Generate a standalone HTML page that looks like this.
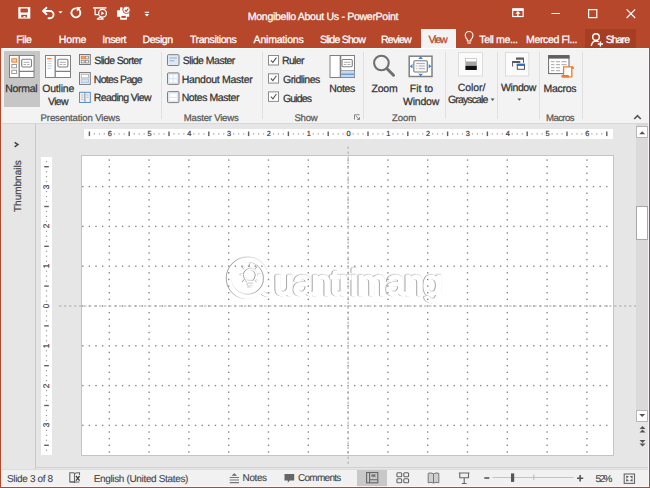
<!DOCTYPE html>
<html><head><meta charset="utf-8">
<style>
*{margin:0;padding:0;box-sizing:border-box}
html,body{width:650px;height:488px;overflow:hidden;background:#e6e6e6}
body{position:relative;font-family:"Liberation Sans",sans-serif;color:#444}
.a{position:absolute;white-space:nowrap}
div.t{text-rendering:geometricPrecision;-webkit-text-stroke:0.25px currentColor}
i.a{display:block}
.rn{font-size:7.4px;line-height:8px;color:#3a3a3a;text-rendering:geometricPrecision;-webkit-text-stroke:0.2px currentColor}
</style></head><body>
<div class="a" style="left:0;top:0;width:650px;height:48px;background:#b7472a"></div>
<div class="a" style="left:420.7px;top:29px;width:35.5px;height:20px;background:#f3f3f3"></div>
<div class="a" style="left:585.2px;top:29.3px;width:51px;height:19.5px;background:#a63e23"></div>
<div class="a" style="left:0;top:48px;width:650px;height:75px;background:#f3f3f3;border-top:1px solid #fff"></div>
<div class="a" style="left:0;top:122.5px;width:650px;height:1.5px;background:#d8d8d8"></div>
<div class="a" style="left:4px;top:51px;width:36.3px;height:55.8px;background:#c6c6c6"></div>

<div class="a" style="left:1px;top:124px;width:648px;height:345px;background:#e6e6e6"></div>
<div class="a" style="left:35px;top:124px;width:1px;height:345px;background:#c8c8c8"></div>
<div class="a" style="left:35px;top:466.5px;width:614px;height:1px;background:#d0d0d0"></div>
<div class="a" style="left:84px;top:128.5px;width:528.5px;height:10px;background:#fff"></div>
<div class="a" style="left:41px;top:157.3px;width:11px;height:297.5px;background:#fff"></div>
<div class="a" style="left:81.3px;top:155.2px;width:532.5px;height:300.5px;background:#fff;border:1px solid #c4c4c4"></div>
<div class="a" style="left:636px;top:124px;width:12.5px;height:298px;background:#dadada"></div>
<div class="a" style="left:636px;top:126px;width:11.7px;height:12px;background:#fff;border:1px solid #b8b8b8"></div>
<div class="a" style="left:636px;top:205.5px;width:11.7px;height:34.5px;background:#fff;border:1px solid #a8a8a8"></div>
<div class="a" style="left:636px;top:409.5px;width:11.7px;height:12px;background:#fff;border:1px solid #b8b8b8"></div>

<div class="a" style="left:1px;top:469px;width:648px;height:18px;background:#f1f1f1;border-top:1px solid #dcdcdc"></div>
<div class="a" style="left:357.4px;top:470px;width:29.6px;height:17px;background:#c8c8c8"></div>

<svg class="a" style="left:0;top:0;filter:drop-shadow(-0.8px 0.9px 0.7px rgba(0,0,0,0.32)) drop-shadow(0.4px -0.4px 0.5px rgba(0,0,0,0.12))" width="650" height="488">
<g fill="none" stroke="#fff">
<circle cx="247.6" cy="278.2" r="18.6" stroke-width="4.6"/>
<path d="M261,291 Q264,295.5 268.5,295" stroke-width="3.2" stroke-linecap="round"/>
<path d="M247.5,281.5 C245.5,279 244.6,277.3 244.6,275.2 A5.9,5.9 0 0 1 256.4,275.2 C256.4,277.3 255.5,279 253.5,281.5 Z" stroke-width="1.4"/>
<path d="M247.6,284.5 H253.4 M248.5,286.8 H252.5" stroke-width="1.3"/>
<path d="M250.5,264.2 V266.4 M243.2,267.2 L244.6,268.6 M257.8,267.2 L256.4,268.6 M241,274.6 H243 M258,274.6 H260 M243.6,281.6 L244.8,280.4 M257.4,281.6 L256.2,280.4" stroke-width="1.3" stroke-linecap="round"/>
</g>
<g font-family="Liberation Sans" font-size="35" letter-spacing="-0.75">
<text x="274.2" y="295.4" fill="#fff" stroke="#fff" stroke-width="2.3" stroke-linejoin="round">uantrimang</text>
</g>
</svg>
<svg class="a" style="left:0;top:0" width="650" height="488"><g fill="#888"><rect x="108.60" y="159.37" width="1.4" height="1.4"/><rect x="108.60" y="166.00" width="1.4" height="1.4"/><rect x="108.60" y="172.63" width="1.4" height="1.4"/><rect x="108.60" y="179.27" width="1.4" height="1.4"/><rect x="108.60" y="185.90" width="1.4" height="1.4"/><rect x="108.60" y="192.53" width="1.4" height="1.4"/><rect x="108.60" y="199.17" width="1.4" height="1.4"/><rect x="108.60" y="205.80" width="1.4" height="1.4"/><rect x="108.60" y="212.43" width="1.4" height="1.4"/><rect x="108.60" y="219.07" width="1.4" height="1.4"/><rect x="108.60" y="225.70" width="1.4" height="1.4"/><rect x="108.60" y="232.33" width="1.4" height="1.4"/><rect x="108.60" y="238.97" width="1.4" height="1.4"/><rect x="108.60" y="245.60" width="1.4" height="1.4"/><rect x="108.60" y="252.23" width="1.4" height="1.4"/><rect x="108.60" y="258.87" width="1.4" height="1.4"/><rect x="108.60" y="265.50" width="1.4" height="1.4"/><rect x="108.60" y="272.13" width="1.4" height="1.4"/><rect x="108.60" y="278.77" width="1.4" height="1.4"/><rect x="108.60" y="285.40" width="1.4" height="1.4"/><rect x="108.60" y="292.03" width="1.4" height="1.4"/><rect x="108.60" y="298.67" width="1.4" height="1.4"/><rect x="108.60" y="305.30" width="1.4" height="1.4"/><rect x="108.60" y="311.93" width="1.4" height="1.4"/><rect x="108.60" y="318.57" width="1.4" height="1.4"/><rect x="108.60" y="325.20" width="1.4" height="1.4"/><rect x="108.60" y="331.83" width="1.4" height="1.4"/><rect x="108.60" y="338.47" width="1.4" height="1.4"/><rect x="108.60" y="345.10" width="1.4" height="1.4"/><rect x="108.60" y="351.73" width="1.4" height="1.4"/><rect x="108.60" y="358.37" width="1.4" height="1.4"/><rect x="108.60" y="365.00" width="1.4" height="1.4"/><rect x="108.60" y="371.63" width="1.4" height="1.4"/><rect x="108.60" y="378.27" width="1.4" height="1.4"/><rect x="108.60" y="384.90" width="1.4" height="1.4"/><rect x="108.60" y="391.53" width="1.4" height="1.4"/><rect x="108.60" y="398.17" width="1.4" height="1.4"/><rect x="108.60" y="404.80" width="1.4" height="1.4"/><rect x="108.60" y="411.43" width="1.4" height="1.4"/><rect x="108.60" y="418.07" width="1.4" height="1.4"/><rect x="108.60" y="424.70" width="1.4" height="1.4"/><rect x="108.60" y="431.33" width="1.4" height="1.4"/><rect x="108.60" y="437.97" width="1.4" height="1.4"/><rect x="108.60" y="444.60" width="1.4" height="1.4"/><rect x="108.60" y="451.23" width="1.4" height="1.4"/><rect x="148.40" y="159.37" width="1.4" height="1.4"/><rect x="148.40" y="166.00" width="1.4" height="1.4"/><rect x="148.40" y="172.63" width="1.4" height="1.4"/><rect x="148.40" y="179.27" width="1.4" height="1.4"/><rect x="148.40" y="185.90" width="1.4" height="1.4"/><rect x="148.40" y="192.53" width="1.4" height="1.4"/><rect x="148.40" y="199.17" width="1.4" height="1.4"/><rect x="148.40" y="205.80" width="1.4" height="1.4"/><rect x="148.40" y="212.43" width="1.4" height="1.4"/><rect x="148.40" y="219.07" width="1.4" height="1.4"/><rect x="148.40" y="225.70" width="1.4" height="1.4"/><rect x="148.40" y="232.33" width="1.4" height="1.4"/><rect x="148.40" y="238.97" width="1.4" height="1.4"/><rect x="148.40" y="245.60" width="1.4" height="1.4"/><rect x="148.40" y="252.23" width="1.4" height="1.4"/><rect x="148.40" y="258.87" width="1.4" height="1.4"/><rect x="148.40" y="265.50" width="1.4" height="1.4"/><rect x="148.40" y="272.13" width="1.4" height="1.4"/><rect x="148.40" y="278.77" width="1.4" height="1.4"/><rect x="148.40" y="285.40" width="1.4" height="1.4"/><rect x="148.40" y="292.03" width="1.4" height="1.4"/><rect x="148.40" y="298.67" width="1.4" height="1.4"/><rect x="148.40" y="305.30" width="1.4" height="1.4"/><rect x="148.40" y="311.93" width="1.4" height="1.4"/><rect x="148.40" y="318.57" width="1.4" height="1.4"/><rect x="148.40" y="325.20" width="1.4" height="1.4"/><rect x="148.40" y="331.83" width="1.4" height="1.4"/><rect x="148.40" y="338.47" width="1.4" height="1.4"/><rect x="148.40" y="345.10" width="1.4" height="1.4"/><rect x="148.40" y="351.73" width="1.4" height="1.4"/><rect x="148.40" y="358.37" width="1.4" height="1.4"/><rect x="148.40" y="365.00" width="1.4" height="1.4"/><rect x="148.40" y="371.63" width="1.4" height="1.4"/><rect x="148.40" y="378.27" width="1.4" height="1.4"/><rect x="148.40" y="384.90" width="1.4" height="1.4"/><rect x="148.40" y="391.53" width="1.4" height="1.4"/><rect x="148.40" y="398.17" width="1.4" height="1.4"/><rect x="148.40" y="404.80" width="1.4" height="1.4"/><rect x="148.40" y="411.43" width="1.4" height="1.4"/><rect x="148.40" y="418.07" width="1.4" height="1.4"/><rect x="148.40" y="424.70" width="1.4" height="1.4"/><rect x="148.40" y="431.33" width="1.4" height="1.4"/><rect x="148.40" y="437.97" width="1.4" height="1.4"/><rect x="148.40" y="444.60" width="1.4" height="1.4"/><rect x="148.40" y="451.23" width="1.4" height="1.4"/><rect x="188.20" y="159.37" width="1.4" height="1.4"/><rect x="188.20" y="166.00" width="1.4" height="1.4"/><rect x="188.20" y="172.63" width="1.4" height="1.4"/><rect x="188.20" y="179.27" width="1.4" height="1.4"/><rect x="188.20" y="185.90" width="1.4" height="1.4"/><rect x="188.20" y="192.53" width="1.4" height="1.4"/><rect x="188.20" y="199.17" width="1.4" height="1.4"/><rect x="188.20" y="205.80" width="1.4" height="1.4"/><rect x="188.20" y="212.43" width="1.4" height="1.4"/><rect x="188.20" y="219.07" width="1.4" height="1.4"/><rect x="188.20" y="225.70" width="1.4" height="1.4"/><rect x="188.20" y="232.33" width="1.4" height="1.4"/><rect x="188.20" y="238.97" width="1.4" height="1.4"/><rect x="188.20" y="245.60" width="1.4" height="1.4"/><rect x="188.20" y="252.23" width="1.4" height="1.4"/><rect x="188.20" y="258.87" width="1.4" height="1.4"/><rect x="188.20" y="265.50" width="1.4" height="1.4"/><rect x="188.20" y="272.13" width="1.4" height="1.4"/><rect x="188.20" y="278.77" width="1.4" height="1.4"/><rect x="188.20" y="285.40" width="1.4" height="1.4"/><rect x="188.20" y="292.03" width="1.4" height="1.4"/><rect x="188.20" y="298.67" width="1.4" height="1.4"/><rect x="188.20" y="305.30" width="1.4" height="1.4"/><rect x="188.20" y="311.93" width="1.4" height="1.4"/><rect x="188.20" y="318.57" width="1.4" height="1.4"/><rect x="188.20" y="325.20" width="1.4" height="1.4"/><rect x="188.20" y="331.83" width="1.4" height="1.4"/><rect x="188.20" y="338.47" width="1.4" height="1.4"/><rect x="188.20" y="345.10" width="1.4" height="1.4"/><rect x="188.20" y="351.73" width="1.4" height="1.4"/><rect x="188.20" y="358.37" width="1.4" height="1.4"/><rect x="188.20" y="365.00" width="1.4" height="1.4"/><rect x="188.20" y="371.63" width="1.4" height="1.4"/><rect x="188.20" y="378.27" width="1.4" height="1.4"/><rect x="188.20" y="384.90" width="1.4" height="1.4"/><rect x="188.20" y="391.53" width="1.4" height="1.4"/><rect x="188.20" y="398.17" width="1.4" height="1.4"/><rect x="188.20" y="404.80" width="1.4" height="1.4"/><rect x="188.20" y="411.43" width="1.4" height="1.4"/><rect x="188.20" y="418.07" width="1.4" height="1.4"/><rect x="188.20" y="424.70" width="1.4" height="1.4"/><rect x="188.20" y="431.33" width="1.4" height="1.4"/><rect x="188.20" y="437.97" width="1.4" height="1.4"/><rect x="188.20" y="444.60" width="1.4" height="1.4"/><rect x="188.20" y="451.23" width="1.4" height="1.4"/><rect x="228.00" y="159.37" width="1.4" height="1.4"/><rect x="228.00" y="166.00" width="1.4" height="1.4"/><rect x="228.00" y="172.63" width="1.4" height="1.4"/><rect x="228.00" y="179.27" width="1.4" height="1.4"/><rect x="228.00" y="185.90" width="1.4" height="1.4"/><rect x="228.00" y="192.53" width="1.4" height="1.4"/><rect x="228.00" y="199.17" width="1.4" height="1.4"/><rect x="228.00" y="205.80" width="1.4" height="1.4"/><rect x="228.00" y="212.43" width="1.4" height="1.4"/><rect x="228.00" y="219.07" width="1.4" height="1.4"/><rect x="228.00" y="225.70" width="1.4" height="1.4"/><rect x="228.00" y="232.33" width="1.4" height="1.4"/><rect x="228.00" y="238.97" width="1.4" height="1.4"/><rect x="228.00" y="245.60" width="1.4" height="1.4"/><rect x="228.00" y="252.23" width="1.4" height="1.4"/><rect x="228.00" y="258.87" width="1.4" height="1.4"/><rect x="228.00" y="265.50" width="1.4" height="1.4"/><rect x="228.00" y="272.13" width="1.4" height="1.4"/><rect x="228.00" y="278.77" width="1.4" height="1.4"/><rect x="228.00" y="285.40" width="1.4" height="1.4"/><rect x="228.00" y="292.03" width="1.4" height="1.4"/><rect x="228.00" y="298.67" width="1.4" height="1.4"/><rect x="228.00" y="305.30" width="1.4" height="1.4"/><rect x="228.00" y="311.93" width="1.4" height="1.4"/><rect x="228.00" y="318.57" width="1.4" height="1.4"/><rect x="228.00" y="325.20" width="1.4" height="1.4"/><rect x="228.00" y="331.83" width="1.4" height="1.4"/><rect x="228.00" y="338.47" width="1.4" height="1.4"/><rect x="228.00" y="345.10" width="1.4" height="1.4"/><rect x="228.00" y="351.73" width="1.4" height="1.4"/><rect x="228.00" y="358.37" width="1.4" height="1.4"/><rect x="228.00" y="365.00" width="1.4" height="1.4"/><rect x="228.00" y="371.63" width="1.4" height="1.4"/><rect x="228.00" y="378.27" width="1.4" height="1.4"/><rect x="228.00" y="384.90" width="1.4" height="1.4"/><rect x="228.00" y="391.53" width="1.4" height="1.4"/><rect x="228.00" y="398.17" width="1.4" height="1.4"/><rect x="228.00" y="404.80" width="1.4" height="1.4"/><rect x="228.00" y="411.43" width="1.4" height="1.4"/><rect x="228.00" y="418.07" width="1.4" height="1.4"/><rect x="228.00" y="424.70" width="1.4" height="1.4"/><rect x="228.00" y="431.33" width="1.4" height="1.4"/><rect x="228.00" y="437.97" width="1.4" height="1.4"/><rect x="228.00" y="444.60" width="1.4" height="1.4"/><rect x="228.00" y="451.23" width="1.4" height="1.4"/><rect x="267.80" y="159.37" width="1.4" height="1.4"/><rect x="267.80" y="166.00" width="1.4" height="1.4"/><rect x="267.80" y="172.63" width="1.4" height="1.4"/><rect x="267.80" y="179.27" width="1.4" height="1.4"/><rect x="267.80" y="185.90" width="1.4" height="1.4"/><rect x="267.80" y="192.53" width="1.4" height="1.4"/><rect x="267.80" y="199.17" width="1.4" height="1.4"/><rect x="267.80" y="205.80" width="1.4" height="1.4"/><rect x="267.80" y="212.43" width="1.4" height="1.4"/><rect x="267.80" y="219.07" width="1.4" height="1.4"/><rect x="267.80" y="225.70" width="1.4" height="1.4"/><rect x="267.80" y="232.33" width="1.4" height="1.4"/><rect x="267.80" y="238.97" width="1.4" height="1.4"/><rect x="267.80" y="245.60" width="1.4" height="1.4"/><rect x="267.80" y="252.23" width="1.4" height="1.4"/><rect x="267.80" y="258.87" width="1.4" height="1.4"/><rect x="267.80" y="265.50" width="1.4" height="1.4"/><rect x="267.80" y="272.13" width="1.4" height="1.4"/><rect x="267.80" y="278.77" width="1.4" height="1.4"/><rect x="267.80" y="285.40" width="1.4" height="1.4"/><rect x="267.80" y="292.03" width="1.4" height="1.4"/><rect x="267.80" y="298.67" width="1.4" height="1.4"/><rect x="267.80" y="305.30" width="1.4" height="1.4"/><rect x="267.80" y="311.93" width="1.4" height="1.4"/><rect x="267.80" y="318.57" width="1.4" height="1.4"/><rect x="267.80" y="325.20" width="1.4" height="1.4"/><rect x="267.80" y="331.83" width="1.4" height="1.4"/><rect x="267.80" y="338.47" width="1.4" height="1.4"/><rect x="267.80" y="345.10" width="1.4" height="1.4"/><rect x="267.80" y="351.73" width="1.4" height="1.4"/><rect x="267.80" y="358.37" width="1.4" height="1.4"/><rect x="267.80" y="365.00" width="1.4" height="1.4"/><rect x="267.80" y="371.63" width="1.4" height="1.4"/><rect x="267.80" y="378.27" width="1.4" height="1.4"/><rect x="267.80" y="384.90" width="1.4" height="1.4"/><rect x="267.80" y="391.53" width="1.4" height="1.4"/><rect x="267.80" y="398.17" width="1.4" height="1.4"/><rect x="267.80" y="404.80" width="1.4" height="1.4"/><rect x="267.80" y="411.43" width="1.4" height="1.4"/><rect x="267.80" y="418.07" width="1.4" height="1.4"/><rect x="267.80" y="424.70" width="1.4" height="1.4"/><rect x="267.80" y="431.33" width="1.4" height="1.4"/><rect x="267.80" y="437.97" width="1.4" height="1.4"/><rect x="267.80" y="444.60" width="1.4" height="1.4"/><rect x="267.80" y="451.23" width="1.4" height="1.4"/><rect x="307.60" y="159.37" width="1.4" height="1.4"/><rect x="307.60" y="166.00" width="1.4" height="1.4"/><rect x="307.60" y="172.63" width="1.4" height="1.4"/><rect x="307.60" y="179.27" width="1.4" height="1.4"/><rect x="307.60" y="185.90" width="1.4" height="1.4"/><rect x="307.60" y="192.53" width="1.4" height="1.4"/><rect x="307.60" y="199.17" width="1.4" height="1.4"/><rect x="307.60" y="205.80" width="1.4" height="1.4"/><rect x="307.60" y="212.43" width="1.4" height="1.4"/><rect x="307.60" y="219.07" width="1.4" height="1.4"/><rect x="307.60" y="225.70" width="1.4" height="1.4"/><rect x="307.60" y="232.33" width="1.4" height="1.4"/><rect x="307.60" y="238.97" width="1.4" height="1.4"/><rect x="307.60" y="245.60" width="1.4" height="1.4"/><rect x="307.60" y="252.23" width="1.4" height="1.4"/><rect x="307.60" y="258.87" width="1.4" height="1.4"/><rect x="307.60" y="265.50" width="1.4" height="1.4"/><rect x="307.60" y="272.13" width="1.4" height="1.4"/><rect x="307.60" y="278.77" width="1.4" height="1.4"/><rect x="307.60" y="285.40" width="1.4" height="1.4"/><rect x="307.60" y="292.03" width="1.4" height="1.4"/><rect x="307.60" y="298.67" width="1.4" height="1.4"/><rect x="307.60" y="305.30" width="1.4" height="1.4"/><rect x="307.60" y="311.93" width="1.4" height="1.4"/><rect x="307.60" y="318.57" width="1.4" height="1.4"/><rect x="307.60" y="325.20" width="1.4" height="1.4"/><rect x="307.60" y="331.83" width="1.4" height="1.4"/><rect x="307.60" y="338.47" width="1.4" height="1.4"/><rect x="307.60" y="345.10" width="1.4" height="1.4"/><rect x="307.60" y="351.73" width="1.4" height="1.4"/><rect x="307.60" y="358.37" width="1.4" height="1.4"/><rect x="307.60" y="365.00" width="1.4" height="1.4"/><rect x="307.60" y="371.63" width="1.4" height="1.4"/><rect x="307.60" y="378.27" width="1.4" height="1.4"/><rect x="307.60" y="384.90" width="1.4" height="1.4"/><rect x="307.60" y="391.53" width="1.4" height="1.4"/><rect x="307.60" y="398.17" width="1.4" height="1.4"/><rect x="307.60" y="404.80" width="1.4" height="1.4"/><rect x="307.60" y="411.43" width="1.4" height="1.4"/><rect x="307.60" y="418.07" width="1.4" height="1.4"/><rect x="307.60" y="424.70" width="1.4" height="1.4"/><rect x="307.60" y="431.33" width="1.4" height="1.4"/><rect x="307.60" y="437.97" width="1.4" height="1.4"/><rect x="307.60" y="444.60" width="1.4" height="1.4"/><rect x="307.60" y="451.23" width="1.4" height="1.4"/><rect x="347.40" y="159.37" width="1.4" height="1.4"/><rect x="347.40" y="166.00" width="1.4" height="1.4"/><rect x="347.40" y="172.63" width="1.4" height="1.4"/><rect x="347.40" y="179.27" width="1.4" height="1.4"/><rect x="347.40" y="185.90" width="1.4" height="1.4"/><rect x="347.40" y="192.53" width="1.4" height="1.4"/><rect x="347.40" y="199.17" width="1.4" height="1.4"/><rect x="347.40" y="205.80" width="1.4" height="1.4"/><rect x="347.40" y="212.43" width="1.4" height="1.4"/><rect x="347.40" y="219.07" width="1.4" height="1.4"/><rect x="347.40" y="225.70" width="1.4" height="1.4"/><rect x="347.40" y="232.33" width="1.4" height="1.4"/><rect x="347.40" y="238.97" width="1.4" height="1.4"/><rect x="347.40" y="245.60" width="1.4" height="1.4"/><rect x="347.40" y="252.23" width="1.4" height="1.4"/><rect x="347.40" y="258.87" width="1.4" height="1.4"/><rect x="347.40" y="265.50" width="1.4" height="1.4"/><rect x="347.40" y="272.13" width="1.4" height="1.4"/><rect x="347.40" y="278.77" width="1.4" height="1.4"/><rect x="347.40" y="285.40" width="1.4" height="1.4"/><rect x="347.40" y="292.03" width="1.4" height="1.4"/><rect x="347.40" y="298.67" width="1.4" height="1.4"/><rect x="347.40" y="305.30" width="1.4" height="1.4"/><rect x="347.40" y="311.93" width="1.4" height="1.4"/><rect x="347.40" y="318.57" width="1.4" height="1.4"/><rect x="347.40" y="325.20" width="1.4" height="1.4"/><rect x="347.40" y="331.83" width="1.4" height="1.4"/><rect x="347.40" y="338.47" width="1.4" height="1.4"/><rect x="347.40" y="345.10" width="1.4" height="1.4"/><rect x="347.40" y="351.73" width="1.4" height="1.4"/><rect x="347.40" y="358.37" width="1.4" height="1.4"/><rect x="347.40" y="365.00" width="1.4" height="1.4"/><rect x="347.40" y="371.63" width="1.4" height="1.4"/><rect x="347.40" y="378.27" width="1.4" height="1.4"/><rect x="347.40" y="384.90" width="1.4" height="1.4"/><rect x="347.40" y="391.53" width="1.4" height="1.4"/><rect x="347.40" y="398.17" width="1.4" height="1.4"/><rect x="347.40" y="404.80" width="1.4" height="1.4"/><rect x="347.40" y="411.43" width="1.4" height="1.4"/><rect x="347.40" y="418.07" width="1.4" height="1.4"/><rect x="347.40" y="424.70" width="1.4" height="1.4"/><rect x="347.40" y="431.33" width="1.4" height="1.4"/><rect x="347.40" y="437.97" width="1.4" height="1.4"/><rect x="347.40" y="444.60" width="1.4" height="1.4"/><rect x="347.40" y="451.23" width="1.4" height="1.4"/><rect x="387.20" y="159.37" width="1.4" height="1.4"/><rect x="387.20" y="166.00" width="1.4" height="1.4"/><rect x="387.20" y="172.63" width="1.4" height="1.4"/><rect x="387.20" y="179.27" width="1.4" height="1.4"/><rect x="387.20" y="185.90" width="1.4" height="1.4"/><rect x="387.20" y="192.53" width="1.4" height="1.4"/><rect x="387.20" y="199.17" width="1.4" height="1.4"/><rect x="387.20" y="205.80" width="1.4" height="1.4"/><rect x="387.20" y="212.43" width="1.4" height="1.4"/><rect x="387.20" y="219.07" width="1.4" height="1.4"/><rect x="387.20" y="225.70" width="1.4" height="1.4"/><rect x="387.20" y="232.33" width="1.4" height="1.4"/><rect x="387.20" y="238.97" width="1.4" height="1.4"/><rect x="387.20" y="245.60" width="1.4" height="1.4"/><rect x="387.20" y="252.23" width="1.4" height="1.4"/><rect x="387.20" y="258.87" width="1.4" height="1.4"/><rect x="387.20" y="265.50" width="1.4" height="1.4"/><rect x="387.20" y="272.13" width="1.4" height="1.4"/><rect x="387.20" y="278.77" width="1.4" height="1.4"/><rect x="387.20" y="285.40" width="1.4" height="1.4"/><rect x="387.20" y="292.03" width="1.4" height="1.4"/><rect x="387.20" y="298.67" width="1.4" height="1.4"/><rect x="387.20" y="305.30" width="1.4" height="1.4"/><rect x="387.20" y="311.93" width="1.4" height="1.4"/><rect x="387.20" y="318.57" width="1.4" height="1.4"/><rect x="387.20" y="325.20" width="1.4" height="1.4"/><rect x="387.20" y="331.83" width="1.4" height="1.4"/><rect x="387.20" y="338.47" width="1.4" height="1.4"/><rect x="387.20" y="345.10" width="1.4" height="1.4"/><rect x="387.20" y="351.73" width="1.4" height="1.4"/><rect x="387.20" y="358.37" width="1.4" height="1.4"/><rect x="387.20" y="365.00" width="1.4" height="1.4"/><rect x="387.20" y="371.63" width="1.4" height="1.4"/><rect x="387.20" y="378.27" width="1.4" height="1.4"/><rect x="387.20" y="384.90" width="1.4" height="1.4"/><rect x="387.20" y="391.53" width="1.4" height="1.4"/><rect x="387.20" y="398.17" width="1.4" height="1.4"/><rect x="387.20" y="404.80" width="1.4" height="1.4"/><rect x="387.20" y="411.43" width="1.4" height="1.4"/><rect x="387.20" y="418.07" width="1.4" height="1.4"/><rect x="387.20" y="424.70" width="1.4" height="1.4"/><rect x="387.20" y="431.33" width="1.4" height="1.4"/><rect x="387.20" y="437.97" width="1.4" height="1.4"/><rect x="387.20" y="444.60" width="1.4" height="1.4"/><rect x="387.20" y="451.23" width="1.4" height="1.4"/><rect x="427.00" y="159.37" width="1.4" height="1.4"/><rect x="427.00" y="166.00" width="1.4" height="1.4"/><rect x="427.00" y="172.63" width="1.4" height="1.4"/><rect x="427.00" y="179.27" width="1.4" height="1.4"/><rect x="427.00" y="185.90" width="1.4" height="1.4"/><rect x="427.00" y="192.53" width="1.4" height="1.4"/><rect x="427.00" y="199.17" width="1.4" height="1.4"/><rect x="427.00" y="205.80" width="1.4" height="1.4"/><rect x="427.00" y="212.43" width="1.4" height="1.4"/><rect x="427.00" y="219.07" width="1.4" height="1.4"/><rect x="427.00" y="225.70" width="1.4" height="1.4"/><rect x="427.00" y="232.33" width="1.4" height="1.4"/><rect x="427.00" y="238.97" width="1.4" height="1.4"/><rect x="427.00" y="245.60" width="1.4" height="1.4"/><rect x="427.00" y="252.23" width="1.4" height="1.4"/><rect x="427.00" y="258.87" width="1.4" height="1.4"/><rect x="427.00" y="265.50" width="1.4" height="1.4"/><rect x="427.00" y="272.13" width="1.4" height="1.4"/><rect x="427.00" y="278.77" width="1.4" height="1.4"/><rect x="427.00" y="285.40" width="1.4" height="1.4"/><rect x="427.00" y="292.03" width="1.4" height="1.4"/><rect x="427.00" y="298.67" width="1.4" height="1.4"/><rect x="427.00" y="305.30" width="1.4" height="1.4"/><rect x="427.00" y="311.93" width="1.4" height="1.4"/><rect x="427.00" y="318.57" width="1.4" height="1.4"/><rect x="427.00" y="325.20" width="1.4" height="1.4"/><rect x="427.00" y="331.83" width="1.4" height="1.4"/><rect x="427.00" y="338.47" width="1.4" height="1.4"/><rect x="427.00" y="345.10" width="1.4" height="1.4"/><rect x="427.00" y="351.73" width="1.4" height="1.4"/><rect x="427.00" y="358.37" width="1.4" height="1.4"/><rect x="427.00" y="365.00" width="1.4" height="1.4"/><rect x="427.00" y="371.63" width="1.4" height="1.4"/><rect x="427.00" y="378.27" width="1.4" height="1.4"/><rect x="427.00" y="384.90" width="1.4" height="1.4"/><rect x="427.00" y="391.53" width="1.4" height="1.4"/><rect x="427.00" y="398.17" width="1.4" height="1.4"/><rect x="427.00" y="404.80" width="1.4" height="1.4"/><rect x="427.00" y="411.43" width="1.4" height="1.4"/><rect x="427.00" y="418.07" width="1.4" height="1.4"/><rect x="427.00" y="424.70" width="1.4" height="1.4"/><rect x="427.00" y="431.33" width="1.4" height="1.4"/><rect x="427.00" y="437.97" width="1.4" height="1.4"/><rect x="427.00" y="444.60" width="1.4" height="1.4"/><rect x="427.00" y="451.23" width="1.4" height="1.4"/><rect x="466.80" y="159.37" width="1.4" height="1.4"/><rect x="466.80" y="166.00" width="1.4" height="1.4"/><rect x="466.80" y="172.63" width="1.4" height="1.4"/><rect x="466.80" y="179.27" width="1.4" height="1.4"/><rect x="466.80" y="185.90" width="1.4" height="1.4"/><rect x="466.80" y="192.53" width="1.4" height="1.4"/><rect x="466.80" y="199.17" width="1.4" height="1.4"/><rect x="466.80" y="205.80" width="1.4" height="1.4"/><rect x="466.80" y="212.43" width="1.4" height="1.4"/><rect x="466.80" y="219.07" width="1.4" height="1.4"/><rect x="466.80" y="225.70" width="1.4" height="1.4"/><rect x="466.80" y="232.33" width="1.4" height="1.4"/><rect x="466.80" y="238.97" width="1.4" height="1.4"/><rect x="466.80" y="245.60" width="1.4" height="1.4"/><rect x="466.80" y="252.23" width="1.4" height="1.4"/><rect x="466.80" y="258.87" width="1.4" height="1.4"/><rect x="466.80" y="265.50" width="1.4" height="1.4"/><rect x="466.80" y="272.13" width="1.4" height="1.4"/><rect x="466.80" y="278.77" width="1.4" height="1.4"/><rect x="466.80" y="285.40" width="1.4" height="1.4"/><rect x="466.80" y="292.03" width="1.4" height="1.4"/><rect x="466.80" y="298.67" width="1.4" height="1.4"/><rect x="466.80" y="305.30" width="1.4" height="1.4"/><rect x="466.80" y="311.93" width="1.4" height="1.4"/><rect x="466.80" y="318.57" width="1.4" height="1.4"/><rect x="466.80" y="325.20" width="1.4" height="1.4"/><rect x="466.80" y="331.83" width="1.4" height="1.4"/><rect x="466.80" y="338.47" width="1.4" height="1.4"/><rect x="466.80" y="345.10" width="1.4" height="1.4"/><rect x="466.80" y="351.73" width="1.4" height="1.4"/><rect x="466.80" y="358.37" width="1.4" height="1.4"/><rect x="466.80" y="365.00" width="1.4" height="1.4"/><rect x="466.80" y="371.63" width="1.4" height="1.4"/><rect x="466.80" y="378.27" width="1.4" height="1.4"/><rect x="466.80" y="384.90" width="1.4" height="1.4"/><rect x="466.80" y="391.53" width="1.4" height="1.4"/><rect x="466.80" y="398.17" width="1.4" height="1.4"/><rect x="466.80" y="404.80" width="1.4" height="1.4"/><rect x="466.80" y="411.43" width="1.4" height="1.4"/><rect x="466.80" y="418.07" width="1.4" height="1.4"/><rect x="466.80" y="424.70" width="1.4" height="1.4"/><rect x="466.80" y="431.33" width="1.4" height="1.4"/><rect x="466.80" y="437.97" width="1.4" height="1.4"/><rect x="466.80" y="444.60" width="1.4" height="1.4"/><rect x="466.80" y="451.23" width="1.4" height="1.4"/><rect x="506.60" y="159.37" width="1.4" height="1.4"/><rect x="506.60" y="166.00" width="1.4" height="1.4"/><rect x="506.60" y="172.63" width="1.4" height="1.4"/><rect x="506.60" y="179.27" width="1.4" height="1.4"/><rect x="506.60" y="185.90" width="1.4" height="1.4"/><rect x="506.60" y="192.53" width="1.4" height="1.4"/><rect x="506.60" y="199.17" width="1.4" height="1.4"/><rect x="506.60" y="205.80" width="1.4" height="1.4"/><rect x="506.60" y="212.43" width="1.4" height="1.4"/><rect x="506.60" y="219.07" width="1.4" height="1.4"/><rect x="506.60" y="225.70" width="1.4" height="1.4"/><rect x="506.60" y="232.33" width="1.4" height="1.4"/><rect x="506.60" y="238.97" width="1.4" height="1.4"/><rect x="506.60" y="245.60" width="1.4" height="1.4"/><rect x="506.60" y="252.23" width="1.4" height="1.4"/><rect x="506.60" y="258.87" width="1.4" height="1.4"/><rect x="506.60" y="265.50" width="1.4" height="1.4"/><rect x="506.60" y="272.13" width="1.4" height="1.4"/><rect x="506.60" y="278.77" width="1.4" height="1.4"/><rect x="506.60" y="285.40" width="1.4" height="1.4"/><rect x="506.60" y="292.03" width="1.4" height="1.4"/><rect x="506.60" y="298.67" width="1.4" height="1.4"/><rect x="506.60" y="305.30" width="1.4" height="1.4"/><rect x="506.60" y="311.93" width="1.4" height="1.4"/><rect x="506.60" y="318.57" width="1.4" height="1.4"/><rect x="506.60" y="325.20" width="1.4" height="1.4"/><rect x="506.60" y="331.83" width="1.4" height="1.4"/><rect x="506.60" y="338.47" width="1.4" height="1.4"/><rect x="506.60" y="345.10" width="1.4" height="1.4"/><rect x="506.60" y="351.73" width="1.4" height="1.4"/><rect x="506.60" y="358.37" width="1.4" height="1.4"/><rect x="506.60" y="365.00" width="1.4" height="1.4"/><rect x="506.60" y="371.63" width="1.4" height="1.4"/><rect x="506.60" y="378.27" width="1.4" height="1.4"/><rect x="506.60" y="384.90" width="1.4" height="1.4"/><rect x="506.60" y="391.53" width="1.4" height="1.4"/><rect x="506.60" y="398.17" width="1.4" height="1.4"/><rect x="506.60" y="404.80" width="1.4" height="1.4"/><rect x="506.60" y="411.43" width="1.4" height="1.4"/><rect x="506.60" y="418.07" width="1.4" height="1.4"/><rect x="506.60" y="424.70" width="1.4" height="1.4"/><rect x="506.60" y="431.33" width="1.4" height="1.4"/><rect x="506.60" y="437.97" width="1.4" height="1.4"/><rect x="506.60" y="444.60" width="1.4" height="1.4"/><rect x="506.60" y="451.23" width="1.4" height="1.4"/><rect x="546.40" y="159.37" width="1.4" height="1.4"/><rect x="546.40" y="166.00" width="1.4" height="1.4"/><rect x="546.40" y="172.63" width="1.4" height="1.4"/><rect x="546.40" y="179.27" width="1.4" height="1.4"/><rect x="546.40" y="185.90" width="1.4" height="1.4"/><rect x="546.40" y="192.53" width="1.4" height="1.4"/><rect x="546.40" y="199.17" width="1.4" height="1.4"/><rect x="546.40" y="205.80" width="1.4" height="1.4"/><rect x="546.40" y="212.43" width="1.4" height="1.4"/><rect x="546.40" y="219.07" width="1.4" height="1.4"/><rect x="546.40" y="225.70" width="1.4" height="1.4"/><rect x="546.40" y="232.33" width="1.4" height="1.4"/><rect x="546.40" y="238.97" width="1.4" height="1.4"/><rect x="546.40" y="245.60" width="1.4" height="1.4"/><rect x="546.40" y="252.23" width="1.4" height="1.4"/><rect x="546.40" y="258.87" width="1.4" height="1.4"/><rect x="546.40" y="265.50" width="1.4" height="1.4"/><rect x="546.40" y="272.13" width="1.4" height="1.4"/><rect x="546.40" y="278.77" width="1.4" height="1.4"/><rect x="546.40" y="285.40" width="1.4" height="1.4"/><rect x="546.40" y="292.03" width="1.4" height="1.4"/><rect x="546.40" y="298.67" width="1.4" height="1.4"/><rect x="546.40" y="305.30" width="1.4" height="1.4"/><rect x="546.40" y="311.93" width="1.4" height="1.4"/><rect x="546.40" y="318.57" width="1.4" height="1.4"/><rect x="546.40" y="325.20" width="1.4" height="1.4"/><rect x="546.40" y="331.83" width="1.4" height="1.4"/><rect x="546.40" y="338.47" width="1.4" height="1.4"/><rect x="546.40" y="345.10" width="1.4" height="1.4"/><rect x="546.40" y="351.73" width="1.4" height="1.4"/><rect x="546.40" y="358.37" width="1.4" height="1.4"/><rect x="546.40" y="365.00" width="1.4" height="1.4"/><rect x="546.40" y="371.63" width="1.4" height="1.4"/><rect x="546.40" y="378.27" width="1.4" height="1.4"/><rect x="546.40" y="384.90" width="1.4" height="1.4"/><rect x="546.40" y="391.53" width="1.4" height="1.4"/><rect x="546.40" y="398.17" width="1.4" height="1.4"/><rect x="546.40" y="404.80" width="1.4" height="1.4"/><rect x="546.40" y="411.43" width="1.4" height="1.4"/><rect x="546.40" y="418.07" width="1.4" height="1.4"/><rect x="546.40" y="424.70" width="1.4" height="1.4"/><rect x="546.40" y="431.33" width="1.4" height="1.4"/><rect x="546.40" y="437.97" width="1.4" height="1.4"/><rect x="546.40" y="444.60" width="1.4" height="1.4"/><rect x="546.40" y="451.23" width="1.4" height="1.4"/><rect x="586.20" y="159.37" width="1.4" height="1.4"/><rect x="586.20" y="166.00" width="1.4" height="1.4"/><rect x="586.20" y="172.63" width="1.4" height="1.4"/><rect x="586.20" y="179.27" width="1.4" height="1.4"/><rect x="586.20" y="185.90" width="1.4" height="1.4"/><rect x="586.20" y="192.53" width="1.4" height="1.4"/><rect x="586.20" y="199.17" width="1.4" height="1.4"/><rect x="586.20" y="205.80" width="1.4" height="1.4"/><rect x="586.20" y="212.43" width="1.4" height="1.4"/><rect x="586.20" y="219.07" width="1.4" height="1.4"/><rect x="586.20" y="225.70" width="1.4" height="1.4"/><rect x="586.20" y="232.33" width="1.4" height="1.4"/><rect x="586.20" y="238.97" width="1.4" height="1.4"/><rect x="586.20" y="245.60" width="1.4" height="1.4"/><rect x="586.20" y="252.23" width="1.4" height="1.4"/><rect x="586.20" y="258.87" width="1.4" height="1.4"/><rect x="586.20" y="265.50" width="1.4" height="1.4"/><rect x="586.20" y="272.13" width="1.4" height="1.4"/><rect x="586.20" y="278.77" width="1.4" height="1.4"/><rect x="586.20" y="285.40" width="1.4" height="1.4"/><rect x="586.20" y="292.03" width="1.4" height="1.4"/><rect x="586.20" y="298.67" width="1.4" height="1.4"/><rect x="586.20" y="305.30" width="1.4" height="1.4"/><rect x="586.20" y="311.93" width="1.4" height="1.4"/><rect x="586.20" y="318.57" width="1.4" height="1.4"/><rect x="586.20" y="325.20" width="1.4" height="1.4"/><rect x="586.20" y="331.83" width="1.4" height="1.4"/><rect x="586.20" y="338.47" width="1.4" height="1.4"/><rect x="586.20" y="345.10" width="1.4" height="1.4"/><rect x="586.20" y="351.73" width="1.4" height="1.4"/><rect x="586.20" y="358.37" width="1.4" height="1.4"/><rect x="586.20" y="365.00" width="1.4" height="1.4"/><rect x="586.20" y="371.63" width="1.4" height="1.4"/><rect x="586.20" y="378.27" width="1.4" height="1.4"/><rect x="586.20" y="384.90" width="1.4" height="1.4"/><rect x="586.20" y="391.53" width="1.4" height="1.4"/><rect x="586.20" y="398.17" width="1.4" height="1.4"/><rect x="586.20" y="404.80" width="1.4" height="1.4"/><rect x="586.20" y="411.43" width="1.4" height="1.4"/><rect x="586.20" y="418.07" width="1.4" height="1.4"/><rect x="586.20" y="424.70" width="1.4" height="1.4"/><rect x="586.20" y="431.33" width="1.4" height="1.4"/><rect x="586.20" y="437.97" width="1.4" height="1.4"/><rect x="586.20" y="444.60" width="1.4" height="1.4"/><rect x="586.20" y="451.23" width="1.4" height="1.4"/><rect x="82.07" y="185.90" width="1.4" height="1.4"/><rect x="88.70" y="185.90" width="1.4" height="1.4"/><rect x="95.33" y="185.90" width="1.4" height="1.4"/><rect x="101.97" y="185.90" width="1.4" height="1.4"/><rect x="115.23" y="185.90" width="1.4" height="1.4"/><rect x="121.87" y="185.90" width="1.4" height="1.4"/><rect x="128.50" y="185.90" width="1.4" height="1.4"/><rect x="135.13" y="185.90" width="1.4" height="1.4"/><rect x="141.77" y="185.90" width="1.4" height="1.4"/><rect x="155.03" y="185.90" width="1.4" height="1.4"/><rect x="161.67" y="185.90" width="1.4" height="1.4"/><rect x="168.30" y="185.90" width="1.4" height="1.4"/><rect x="174.93" y="185.90" width="1.4" height="1.4"/><rect x="181.57" y="185.90" width="1.4" height="1.4"/><rect x="194.83" y="185.90" width="1.4" height="1.4"/><rect x="201.47" y="185.90" width="1.4" height="1.4"/><rect x="208.10" y="185.90" width="1.4" height="1.4"/><rect x="214.73" y="185.90" width="1.4" height="1.4"/><rect x="221.37" y="185.90" width="1.4" height="1.4"/><rect x="234.63" y="185.90" width="1.4" height="1.4"/><rect x="241.27" y="185.90" width="1.4" height="1.4"/><rect x="247.90" y="185.90" width="1.4" height="1.4"/><rect x="254.53" y="185.90" width="1.4" height="1.4"/><rect x="261.17" y="185.90" width="1.4" height="1.4"/><rect x="274.43" y="185.90" width="1.4" height="1.4"/><rect x="281.07" y="185.90" width="1.4" height="1.4"/><rect x="287.70" y="185.90" width="1.4" height="1.4"/><rect x="294.33" y="185.90" width="1.4" height="1.4"/><rect x="300.97" y="185.90" width="1.4" height="1.4"/><rect x="314.23" y="185.90" width="1.4" height="1.4"/><rect x="320.87" y="185.90" width="1.4" height="1.4"/><rect x="327.50" y="185.90" width="1.4" height="1.4"/><rect x="334.13" y="185.90" width="1.4" height="1.4"/><rect x="340.77" y="185.90" width="1.4" height="1.4"/><rect x="354.03" y="185.90" width="1.4" height="1.4"/><rect x="360.67" y="185.90" width="1.4" height="1.4"/><rect x="367.30" y="185.90" width="1.4" height="1.4"/><rect x="373.93" y="185.90" width="1.4" height="1.4"/><rect x="380.57" y="185.90" width="1.4" height="1.4"/><rect x="393.83" y="185.90" width="1.4" height="1.4"/><rect x="400.47" y="185.90" width="1.4" height="1.4"/><rect x="407.10" y="185.90" width="1.4" height="1.4"/><rect x="413.73" y="185.90" width="1.4" height="1.4"/><rect x="420.37" y="185.90" width="1.4" height="1.4"/><rect x="433.63" y="185.90" width="1.4" height="1.4"/><rect x="440.27" y="185.90" width="1.4" height="1.4"/><rect x="446.90" y="185.90" width="1.4" height="1.4"/><rect x="453.53" y="185.90" width="1.4" height="1.4"/><rect x="460.17" y="185.90" width="1.4" height="1.4"/><rect x="473.43" y="185.90" width="1.4" height="1.4"/><rect x="480.07" y="185.90" width="1.4" height="1.4"/><rect x="486.70" y="185.90" width="1.4" height="1.4"/><rect x="493.33" y="185.90" width="1.4" height="1.4"/><rect x="499.97" y="185.90" width="1.4" height="1.4"/><rect x="513.23" y="185.90" width="1.4" height="1.4"/><rect x="519.87" y="185.90" width="1.4" height="1.4"/><rect x="526.50" y="185.90" width="1.4" height="1.4"/><rect x="533.13" y="185.90" width="1.4" height="1.4"/><rect x="539.77" y="185.90" width="1.4" height="1.4"/><rect x="553.03" y="185.90" width="1.4" height="1.4"/><rect x="559.67" y="185.90" width="1.4" height="1.4"/><rect x="566.30" y="185.90" width="1.4" height="1.4"/><rect x="572.93" y="185.90" width="1.4" height="1.4"/><rect x="579.57" y="185.90" width="1.4" height="1.4"/><rect x="592.83" y="185.90" width="1.4" height="1.4"/><rect x="599.47" y="185.90" width="1.4" height="1.4"/><rect x="606.10" y="185.90" width="1.4" height="1.4"/><rect x="82.07" y="225.70" width="1.4" height="1.4"/><rect x="88.70" y="225.70" width="1.4" height="1.4"/><rect x="95.33" y="225.70" width="1.4" height="1.4"/><rect x="101.97" y="225.70" width="1.4" height="1.4"/><rect x="115.23" y="225.70" width="1.4" height="1.4"/><rect x="121.87" y="225.70" width="1.4" height="1.4"/><rect x="128.50" y="225.70" width="1.4" height="1.4"/><rect x="135.13" y="225.70" width="1.4" height="1.4"/><rect x="141.77" y="225.70" width="1.4" height="1.4"/><rect x="155.03" y="225.70" width="1.4" height="1.4"/><rect x="161.67" y="225.70" width="1.4" height="1.4"/><rect x="168.30" y="225.70" width="1.4" height="1.4"/><rect x="174.93" y="225.70" width="1.4" height="1.4"/><rect x="181.57" y="225.70" width="1.4" height="1.4"/><rect x="194.83" y="225.70" width="1.4" height="1.4"/><rect x="201.47" y="225.70" width="1.4" height="1.4"/><rect x="208.10" y="225.70" width="1.4" height="1.4"/><rect x="214.73" y="225.70" width="1.4" height="1.4"/><rect x="221.37" y="225.70" width="1.4" height="1.4"/><rect x="234.63" y="225.70" width="1.4" height="1.4"/><rect x="241.27" y="225.70" width="1.4" height="1.4"/><rect x="247.90" y="225.70" width="1.4" height="1.4"/><rect x="254.53" y="225.70" width="1.4" height="1.4"/><rect x="261.17" y="225.70" width="1.4" height="1.4"/><rect x="274.43" y="225.70" width="1.4" height="1.4"/><rect x="281.07" y="225.70" width="1.4" height="1.4"/><rect x="287.70" y="225.70" width="1.4" height="1.4"/><rect x="294.33" y="225.70" width="1.4" height="1.4"/><rect x="300.97" y="225.70" width="1.4" height="1.4"/><rect x="314.23" y="225.70" width="1.4" height="1.4"/><rect x="320.87" y="225.70" width="1.4" height="1.4"/><rect x="327.50" y="225.70" width="1.4" height="1.4"/><rect x="334.13" y="225.70" width="1.4" height="1.4"/><rect x="340.77" y="225.70" width="1.4" height="1.4"/><rect x="354.03" y="225.70" width="1.4" height="1.4"/><rect x="360.67" y="225.70" width="1.4" height="1.4"/><rect x="367.30" y="225.70" width="1.4" height="1.4"/><rect x="373.93" y="225.70" width="1.4" height="1.4"/><rect x="380.57" y="225.70" width="1.4" height="1.4"/><rect x="393.83" y="225.70" width="1.4" height="1.4"/><rect x="400.47" y="225.70" width="1.4" height="1.4"/><rect x="407.10" y="225.70" width="1.4" height="1.4"/><rect x="413.73" y="225.70" width="1.4" height="1.4"/><rect x="420.37" y="225.70" width="1.4" height="1.4"/><rect x="433.63" y="225.70" width="1.4" height="1.4"/><rect x="440.27" y="225.70" width="1.4" height="1.4"/><rect x="446.90" y="225.70" width="1.4" height="1.4"/><rect x="453.53" y="225.70" width="1.4" height="1.4"/><rect x="460.17" y="225.70" width="1.4" height="1.4"/><rect x="473.43" y="225.70" width="1.4" height="1.4"/><rect x="480.07" y="225.70" width="1.4" height="1.4"/><rect x="486.70" y="225.70" width="1.4" height="1.4"/><rect x="493.33" y="225.70" width="1.4" height="1.4"/><rect x="499.97" y="225.70" width="1.4" height="1.4"/><rect x="513.23" y="225.70" width="1.4" height="1.4"/><rect x="519.87" y="225.70" width="1.4" height="1.4"/><rect x="526.50" y="225.70" width="1.4" height="1.4"/><rect x="533.13" y="225.70" width="1.4" height="1.4"/><rect x="539.77" y="225.70" width="1.4" height="1.4"/><rect x="553.03" y="225.70" width="1.4" height="1.4"/><rect x="559.67" y="225.70" width="1.4" height="1.4"/><rect x="566.30" y="225.70" width="1.4" height="1.4"/><rect x="572.93" y="225.70" width="1.4" height="1.4"/><rect x="579.57" y="225.70" width="1.4" height="1.4"/><rect x="592.83" y="225.70" width="1.4" height="1.4"/><rect x="599.47" y="225.70" width="1.4" height="1.4"/><rect x="606.10" y="225.70" width="1.4" height="1.4"/><rect x="82.07" y="265.50" width="1.4" height="1.4"/><rect x="88.70" y="265.50" width="1.4" height="1.4"/><rect x="95.33" y="265.50" width="1.4" height="1.4"/><rect x="101.97" y="265.50" width="1.4" height="1.4"/><rect x="115.23" y="265.50" width="1.4" height="1.4"/><rect x="121.87" y="265.50" width="1.4" height="1.4"/><rect x="128.50" y="265.50" width="1.4" height="1.4"/><rect x="135.13" y="265.50" width="1.4" height="1.4"/><rect x="141.77" y="265.50" width="1.4" height="1.4"/><rect x="155.03" y="265.50" width="1.4" height="1.4"/><rect x="161.67" y="265.50" width="1.4" height="1.4"/><rect x="168.30" y="265.50" width="1.4" height="1.4"/><rect x="174.93" y="265.50" width="1.4" height="1.4"/><rect x="181.57" y="265.50" width="1.4" height="1.4"/><rect x="194.83" y="265.50" width="1.4" height="1.4"/><rect x="201.47" y="265.50" width="1.4" height="1.4"/><rect x="208.10" y="265.50" width="1.4" height="1.4"/><rect x="214.73" y="265.50" width="1.4" height="1.4"/><rect x="221.37" y="265.50" width="1.4" height="1.4"/><rect x="234.63" y="265.50" width="1.4" height="1.4"/><rect x="241.27" y="265.50" width="1.4" height="1.4"/><rect x="247.90" y="265.50" width="1.4" height="1.4"/><rect x="254.53" y="265.50" width="1.4" height="1.4"/><rect x="261.17" y="265.50" width="1.4" height="1.4"/><rect x="274.43" y="265.50" width="1.4" height="1.4"/><rect x="281.07" y="265.50" width="1.4" height="1.4"/><rect x="287.70" y="265.50" width="1.4" height="1.4"/><rect x="294.33" y="265.50" width="1.4" height="1.4"/><rect x="300.97" y="265.50" width="1.4" height="1.4"/><rect x="314.23" y="265.50" width="1.4" height="1.4"/><rect x="320.87" y="265.50" width="1.4" height="1.4"/><rect x="327.50" y="265.50" width="1.4" height="1.4"/><rect x="334.13" y="265.50" width="1.4" height="1.4"/><rect x="340.77" y="265.50" width="1.4" height="1.4"/><rect x="354.03" y="265.50" width="1.4" height="1.4"/><rect x="360.67" y="265.50" width="1.4" height="1.4"/><rect x="367.30" y="265.50" width="1.4" height="1.4"/><rect x="373.93" y="265.50" width="1.4" height="1.4"/><rect x="380.57" y="265.50" width="1.4" height="1.4"/><rect x="393.83" y="265.50" width="1.4" height="1.4"/><rect x="400.47" y="265.50" width="1.4" height="1.4"/><rect x="407.10" y="265.50" width="1.4" height="1.4"/><rect x="413.73" y="265.50" width="1.4" height="1.4"/><rect x="420.37" y="265.50" width="1.4" height="1.4"/><rect x="433.63" y="265.50" width="1.4" height="1.4"/><rect x="440.27" y="265.50" width="1.4" height="1.4"/><rect x="446.90" y="265.50" width="1.4" height="1.4"/><rect x="453.53" y="265.50" width="1.4" height="1.4"/><rect x="460.17" y="265.50" width="1.4" height="1.4"/><rect x="473.43" y="265.50" width="1.4" height="1.4"/><rect x="480.07" y="265.50" width="1.4" height="1.4"/><rect x="486.70" y="265.50" width="1.4" height="1.4"/><rect x="493.33" y="265.50" width="1.4" height="1.4"/><rect x="499.97" y="265.50" width="1.4" height="1.4"/><rect x="513.23" y="265.50" width="1.4" height="1.4"/><rect x="519.87" y="265.50" width="1.4" height="1.4"/><rect x="526.50" y="265.50" width="1.4" height="1.4"/><rect x="533.13" y="265.50" width="1.4" height="1.4"/><rect x="539.77" y="265.50" width="1.4" height="1.4"/><rect x="553.03" y="265.50" width="1.4" height="1.4"/><rect x="559.67" y="265.50" width="1.4" height="1.4"/><rect x="566.30" y="265.50" width="1.4" height="1.4"/><rect x="572.93" y="265.50" width="1.4" height="1.4"/><rect x="579.57" y="265.50" width="1.4" height="1.4"/><rect x="592.83" y="265.50" width="1.4" height="1.4"/><rect x="599.47" y="265.50" width="1.4" height="1.4"/><rect x="606.10" y="265.50" width="1.4" height="1.4"/><rect x="82.07" y="305.30" width="1.4" height="1.4"/><rect x="88.70" y="305.30" width="1.4" height="1.4"/><rect x="95.33" y="305.30" width="1.4" height="1.4"/><rect x="101.97" y="305.30" width="1.4" height="1.4"/><rect x="115.23" y="305.30" width="1.4" height="1.4"/><rect x="121.87" y="305.30" width="1.4" height="1.4"/><rect x="128.50" y="305.30" width="1.4" height="1.4"/><rect x="135.13" y="305.30" width="1.4" height="1.4"/><rect x="141.77" y="305.30" width="1.4" height="1.4"/><rect x="155.03" y="305.30" width="1.4" height="1.4"/><rect x="161.67" y="305.30" width="1.4" height="1.4"/><rect x="168.30" y="305.30" width="1.4" height="1.4"/><rect x="174.93" y="305.30" width="1.4" height="1.4"/><rect x="181.57" y="305.30" width="1.4" height="1.4"/><rect x="194.83" y="305.30" width="1.4" height="1.4"/><rect x="201.47" y="305.30" width="1.4" height="1.4"/><rect x="208.10" y="305.30" width="1.4" height="1.4"/><rect x="214.73" y="305.30" width="1.4" height="1.4"/><rect x="221.37" y="305.30" width="1.4" height="1.4"/><rect x="234.63" y="305.30" width="1.4" height="1.4"/><rect x="241.27" y="305.30" width="1.4" height="1.4"/><rect x="247.90" y="305.30" width="1.4" height="1.4"/><rect x="254.53" y="305.30" width="1.4" height="1.4"/><rect x="261.17" y="305.30" width="1.4" height="1.4"/><rect x="274.43" y="305.30" width="1.4" height="1.4"/><rect x="281.07" y="305.30" width="1.4" height="1.4"/><rect x="287.70" y="305.30" width="1.4" height="1.4"/><rect x="294.33" y="305.30" width="1.4" height="1.4"/><rect x="300.97" y="305.30" width="1.4" height="1.4"/><rect x="314.23" y="305.30" width="1.4" height="1.4"/><rect x="320.87" y="305.30" width="1.4" height="1.4"/><rect x="327.50" y="305.30" width="1.4" height="1.4"/><rect x="334.13" y="305.30" width="1.4" height="1.4"/><rect x="340.77" y="305.30" width="1.4" height="1.4"/><rect x="354.03" y="305.30" width="1.4" height="1.4"/><rect x="360.67" y="305.30" width="1.4" height="1.4"/><rect x="367.30" y="305.30" width="1.4" height="1.4"/><rect x="373.93" y="305.30" width="1.4" height="1.4"/><rect x="380.57" y="305.30" width="1.4" height="1.4"/><rect x="393.83" y="305.30" width="1.4" height="1.4"/><rect x="400.47" y="305.30" width="1.4" height="1.4"/><rect x="407.10" y="305.30" width="1.4" height="1.4"/><rect x="413.73" y="305.30" width="1.4" height="1.4"/><rect x="420.37" y="305.30" width="1.4" height="1.4"/><rect x="433.63" y="305.30" width="1.4" height="1.4"/><rect x="440.27" y="305.30" width="1.4" height="1.4"/><rect x="446.90" y="305.30" width="1.4" height="1.4"/><rect x="453.53" y="305.30" width="1.4" height="1.4"/><rect x="460.17" y="305.30" width="1.4" height="1.4"/><rect x="473.43" y="305.30" width="1.4" height="1.4"/><rect x="480.07" y="305.30" width="1.4" height="1.4"/><rect x="486.70" y="305.30" width="1.4" height="1.4"/><rect x="493.33" y="305.30" width="1.4" height="1.4"/><rect x="499.97" y="305.30" width="1.4" height="1.4"/><rect x="513.23" y="305.30" width="1.4" height="1.4"/><rect x="519.87" y="305.30" width="1.4" height="1.4"/><rect x="526.50" y="305.30" width="1.4" height="1.4"/><rect x="533.13" y="305.30" width="1.4" height="1.4"/><rect x="539.77" y="305.30" width="1.4" height="1.4"/><rect x="553.03" y="305.30" width="1.4" height="1.4"/><rect x="559.67" y="305.30" width="1.4" height="1.4"/><rect x="566.30" y="305.30" width="1.4" height="1.4"/><rect x="572.93" y="305.30" width="1.4" height="1.4"/><rect x="579.57" y="305.30" width="1.4" height="1.4"/><rect x="592.83" y="305.30" width="1.4" height="1.4"/><rect x="599.47" y="305.30" width="1.4" height="1.4"/><rect x="606.10" y="305.30" width="1.4" height="1.4"/><rect x="82.07" y="345.10" width="1.4" height="1.4"/><rect x="88.70" y="345.10" width="1.4" height="1.4"/><rect x="95.33" y="345.10" width="1.4" height="1.4"/><rect x="101.97" y="345.10" width="1.4" height="1.4"/><rect x="115.23" y="345.10" width="1.4" height="1.4"/><rect x="121.87" y="345.10" width="1.4" height="1.4"/><rect x="128.50" y="345.10" width="1.4" height="1.4"/><rect x="135.13" y="345.10" width="1.4" height="1.4"/><rect x="141.77" y="345.10" width="1.4" height="1.4"/><rect x="155.03" y="345.10" width="1.4" height="1.4"/><rect x="161.67" y="345.10" width="1.4" height="1.4"/><rect x="168.30" y="345.10" width="1.4" height="1.4"/><rect x="174.93" y="345.10" width="1.4" height="1.4"/><rect x="181.57" y="345.10" width="1.4" height="1.4"/><rect x="194.83" y="345.10" width="1.4" height="1.4"/><rect x="201.47" y="345.10" width="1.4" height="1.4"/><rect x="208.10" y="345.10" width="1.4" height="1.4"/><rect x="214.73" y="345.10" width="1.4" height="1.4"/><rect x="221.37" y="345.10" width="1.4" height="1.4"/><rect x="234.63" y="345.10" width="1.4" height="1.4"/><rect x="241.27" y="345.10" width="1.4" height="1.4"/><rect x="247.90" y="345.10" width="1.4" height="1.4"/><rect x="254.53" y="345.10" width="1.4" height="1.4"/><rect x="261.17" y="345.10" width="1.4" height="1.4"/><rect x="274.43" y="345.10" width="1.4" height="1.4"/><rect x="281.07" y="345.10" width="1.4" height="1.4"/><rect x="287.70" y="345.10" width="1.4" height="1.4"/><rect x="294.33" y="345.10" width="1.4" height="1.4"/><rect x="300.97" y="345.10" width="1.4" height="1.4"/><rect x="314.23" y="345.10" width="1.4" height="1.4"/><rect x="320.87" y="345.10" width="1.4" height="1.4"/><rect x="327.50" y="345.10" width="1.4" height="1.4"/><rect x="334.13" y="345.10" width="1.4" height="1.4"/><rect x="340.77" y="345.10" width="1.4" height="1.4"/><rect x="354.03" y="345.10" width="1.4" height="1.4"/><rect x="360.67" y="345.10" width="1.4" height="1.4"/><rect x="367.30" y="345.10" width="1.4" height="1.4"/><rect x="373.93" y="345.10" width="1.4" height="1.4"/><rect x="380.57" y="345.10" width="1.4" height="1.4"/><rect x="393.83" y="345.10" width="1.4" height="1.4"/><rect x="400.47" y="345.10" width="1.4" height="1.4"/><rect x="407.10" y="345.10" width="1.4" height="1.4"/><rect x="413.73" y="345.10" width="1.4" height="1.4"/><rect x="420.37" y="345.10" width="1.4" height="1.4"/><rect x="433.63" y="345.10" width="1.4" height="1.4"/><rect x="440.27" y="345.10" width="1.4" height="1.4"/><rect x="446.90" y="345.10" width="1.4" height="1.4"/><rect x="453.53" y="345.10" width="1.4" height="1.4"/><rect x="460.17" y="345.10" width="1.4" height="1.4"/><rect x="473.43" y="345.10" width="1.4" height="1.4"/><rect x="480.07" y="345.10" width="1.4" height="1.4"/><rect x="486.70" y="345.10" width="1.4" height="1.4"/><rect x="493.33" y="345.10" width="1.4" height="1.4"/><rect x="499.97" y="345.10" width="1.4" height="1.4"/><rect x="513.23" y="345.10" width="1.4" height="1.4"/><rect x="519.87" y="345.10" width="1.4" height="1.4"/><rect x="526.50" y="345.10" width="1.4" height="1.4"/><rect x="533.13" y="345.10" width="1.4" height="1.4"/><rect x="539.77" y="345.10" width="1.4" height="1.4"/><rect x="553.03" y="345.10" width="1.4" height="1.4"/><rect x="559.67" y="345.10" width="1.4" height="1.4"/><rect x="566.30" y="345.10" width="1.4" height="1.4"/><rect x="572.93" y="345.10" width="1.4" height="1.4"/><rect x="579.57" y="345.10" width="1.4" height="1.4"/><rect x="592.83" y="345.10" width="1.4" height="1.4"/><rect x="599.47" y="345.10" width="1.4" height="1.4"/><rect x="606.10" y="345.10" width="1.4" height="1.4"/><rect x="82.07" y="384.90" width="1.4" height="1.4"/><rect x="88.70" y="384.90" width="1.4" height="1.4"/><rect x="95.33" y="384.90" width="1.4" height="1.4"/><rect x="101.97" y="384.90" width="1.4" height="1.4"/><rect x="115.23" y="384.90" width="1.4" height="1.4"/><rect x="121.87" y="384.90" width="1.4" height="1.4"/><rect x="128.50" y="384.90" width="1.4" height="1.4"/><rect x="135.13" y="384.90" width="1.4" height="1.4"/><rect x="141.77" y="384.90" width="1.4" height="1.4"/><rect x="155.03" y="384.90" width="1.4" height="1.4"/><rect x="161.67" y="384.90" width="1.4" height="1.4"/><rect x="168.30" y="384.90" width="1.4" height="1.4"/><rect x="174.93" y="384.90" width="1.4" height="1.4"/><rect x="181.57" y="384.90" width="1.4" height="1.4"/><rect x="194.83" y="384.90" width="1.4" height="1.4"/><rect x="201.47" y="384.90" width="1.4" height="1.4"/><rect x="208.10" y="384.90" width="1.4" height="1.4"/><rect x="214.73" y="384.90" width="1.4" height="1.4"/><rect x="221.37" y="384.90" width="1.4" height="1.4"/><rect x="234.63" y="384.90" width="1.4" height="1.4"/><rect x="241.27" y="384.90" width="1.4" height="1.4"/><rect x="247.90" y="384.90" width="1.4" height="1.4"/><rect x="254.53" y="384.90" width="1.4" height="1.4"/><rect x="261.17" y="384.90" width="1.4" height="1.4"/><rect x="274.43" y="384.90" width="1.4" height="1.4"/><rect x="281.07" y="384.90" width="1.4" height="1.4"/><rect x="287.70" y="384.90" width="1.4" height="1.4"/><rect x="294.33" y="384.90" width="1.4" height="1.4"/><rect x="300.97" y="384.90" width="1.4" height="1.4"/><rect x="314.23" y="384.90" width="1.4" height="1.4"/><rect x="320.87" y="384.90" width="1.4" height="1.4"/><rect x="327.50" y="384.90" width="1.4" height="1.4"/><rect x="334.13" y="384.90" width="1.4" height="1.4"/><rect x="340.77" y="384.90" width="1.4" height="1.4"/><rect x="354.03" y="384.90" width="1.4" height="1.4"/><rect x="360.67" y="384.90" width="1.4" height="1.4"/><rect x="367.30" y="384.90" width="1.4" height="1.4"/><rect x="373.93" y="384.90" width="1.4" height="1.4"/><rect x="380.57" y="384.90" width="1.4" height="1.4"/><rect x="393.83" y="384.90" width="1.4" height="1.4"/><rect x="400.47" y="384.90" width="1.4" height="1.4"/><rect x="407.10" y="384.90" width="1.4" height="1.4"/><rect x="413.73" y="384.90" width="1.4" height="1.4"/><rect x="420.37" y="384.90" width="1.4" height="1.4"/><rect x="433.63" y="384.90" width="1.4" height="1.4"/><rect x="440.27" y="384.90" width="1.4" height="1.4"/><rect x="446.90" y="384.90" width="1.4" height="1.4"/><rect x="453.53" y="384.90" width="1.4" height="1.4"/><rect x="460.17" y="384.90" width="1.4" height="1.4"/><rect x="473.43" y="384.90" width="1.4" height="1.4"/><rect x="480.07" y="384.90" width="1.4" height="1.4"/><rect x="486.70" y="384.90" width="1.4" height="1.4"/><rect x="493.33" y="384.90" width="1.4" height="1.4"/><rect x="499.97" y="384.90" width="1.4" height="1.4"/><rect x="513.23" y="384.90" width="1.4" height="1.4"/><rect x="519.87" y="384.90" width="1.4" height="1.4"/><rect x="526.50" y="384.90" width="1.4" height="1.4"/><rect x="533.13" y="384.90" width="1.4" height="1.4"/><rect x="539.77" y="384.90" width="1.4" height="1.4"/><rect x="553.03" y="384.90" width="1.4" height="1.4"/><rect x="559.67" y="384.90" width="1.4" height="1.4"/><rect x="566.30" y="384.90" width="1.4" height="1.4"/><rect x="572.93" y="384.90" width="1.4" height="1.4"/><rect x="579.57" y="384.90" width="1.4" height="1.4"/><rect x="592.83" y="384.90" width="1.4" height="1.4"/><rect x="599.47" y="384.90" width="1.4" height="1.4"/><rect x="606.10" y="384.90" width="1.4" height="1.4"/><rect x="82.07" y="424.70" width="1.4" height="1.4"/><rect x="88.70" y="424.70" width="1.4" height="1.4"/><rect x="95.33" y="424.70" width="1.4" height="1.4"/><rect x="101.97" y="424.70" width="1.4" height="1.4"/><rect x="115.23" y="424.70" width="1.4" height="1.4"/><rect x="121.87" y="424.70" width="1.4" height="1.4"/><rect x="128.50" y="424.70" width="1.4" height="1.4"/><rect x="135.13" y="424.70" width="1.4" height="1.4"/><rect x="141.77" y="424.70" width="1.4" height="1.4"/><rect x="155.03" y="424.70" width="1.4" height="1.4"/><rect x="161.67" y="424.70" width="1.4" height="1.4"/><rect x="168.30" y="424.70" width="1.4" height="1.4"/><rect x="174.93" y="424.70" width="1.4" height="1.4"/><rect x="181.57" y="424.70" width="1.4" height="1.4"/><rect x="194.83" y="424.70" width="1.4" height="1.4"/><rect x="201.47" y="424.70" width="1.4" height="1.4"/><rect x="208.10" y="424.70" width="1.4" height="1.4"/><rect x="214.73" y="424.70" width="1.4" height="1.4"/><rect x="221.37" y="424.70" width="1.4" height="1.4"/><rect x="234.63" y="424.70" width="1.4" height="1.4"/><rect x="241.27" y="424.70" width="1.4" height="1.4"/><rect x="247.90" y="424.70" width="1.4" height="1.4"/><rect x="254.53" y="424.70" width="1.4" height="1.4"/><rect x="261.17" y="424.70" width="1.4" height="1.4"/><rect x="274.43" y="424.70" width="1.4" height="1.4"/><rect x="281.07" y="424.70" width="1.4" height="1.4"/><rect x="287.70" y="424.70" width="1.4" height="1.4"/><rect x="294.33" y="424.70" width="1.4" height="1.4"/><rect x="300.97" y="424.70" width="1.4" height="1.4"/><rect x="314.23" y="424.70" width="1.4" height="1.4"/><rect x="320.87" y="424.70" width="1.4" height="1.4"/><rect x="327.50" y="424.70" width="1.4" height="1.4"/><rect x="334.13" y="424.70" width="1.4" height="1.4"/><rect x="340.77" y="424.70" width="1.4" height="1.4"/><rect x="354.03" y="424.70" width="1.4" height="1.4"/><rect x="360.67" y="424.70" width="1.4" height="1.4"/><rect x="367.30" y="424.70" width="1.4" height="1.4"/><rect x="373.93" y="424.70" width="1.4" height="1.4"/><rect x="380.57" y="424.70" width="1.4" height="1.4"/><rect x="393.83" y="424.70" width="1.4" height="1.4"/><rect x="400.47" y="424.70" width="1.4" height="1.4"/><rect x="407.10" y="424.70" width="1.4" height="1.4"/><rect x="413.73" y="424.70" width="1.4" height="1.4"/><rect x="420.37" y="424.70" width="1.4" height="1.4"/><rect x="433.63" y="424.70" width="1.4" height="1.4"/><rect x="440.27" y="424.70" width="1.4" height="1.4"/><rect x="446.90" y="424.70" width="1.4" height="1.4"/><rect x="453.53" y="424.70" width="1.4" height="1.4"/><rect x="460.17" y="424.70" width="1.4" height="1.4"/><rect x="473.43" y="424.70" width="1.4" height="1.4"/><rect x="480.07" y="424.70" width="1.4" height="1.4"/><rect x="486.70" y="424.70" width="1.4" height="1.4"/><rect x="493.33" y="424.70" width="1.4" height="1.4"/><rect x="499.97" y="424.70" width="1.4" height="1.4"/><rect x="513.23" y="424.70" width="1.4" height="1.4"/><rect x="519.87" y="424.70" width="1.4" height="1.4"/><rect x="526.50" y="424.70" width="1.4" height="1.4"/><rect x="533.13" y="424.70" width="1.4" height="1.4"/><rect x="539.77" y="424.70" width="1.4" height="1.4"/><rect x="553.03" y="424.70" width="1.4" height="1.4"/><rect x="559.67" y="424.70" width="1.4" height="1.4"/><rect x="566.30" y="424.70" width="1.4" height="1.4"/><rect x="572.93" y="424.70" width="1.4" height="1.4"/><rect x="579.57" y="424.70" width="1.4" height="1.4"/><rect x="592.83" y="424.70" width="1.4" height="1.4"/><rect x="599.47" y="424.70" width="1.4" height="1.4"/><rect x="606.10" y="424.70" width="1.4" height="1.4"/></g><path d="M59,306.0 H636" stroke="#aaaaaa" stroke-width="1" stroke-dasharray="2.5,2.5"/><path d="M348.1,146.5 V465" stroke="#aaaaaa" stroke-width="1" stroke-dasharray="2.5,2.5"/><g fill="#999"><rect x="93.78" y="133.3" width="1.2" height="1.2"/><rect x="98.75" y="133.3" width="1.2" height="1.2"/><rect x="103.73" y="133.3" width="1.2" height="1.2"/><rect x="88.70" y="131.5" width="1.4" height="4.6" fill="#606060"/><rect x="113.68" y="133.3" width="1.2" height="1.2"/><rect x="118.65" y="133.3" width="1.2" height="1.2"/><rect x="123.63" y="133.3" width="1.2" height="1.2"/><rect x="133.58" y="133.3" width="1.2" height="1.2"/><rect x="138.55" y="133.3" width="1.2" height="1.2"/><rect x="143.53" y="133.3" width="1.2" height="1.2"/><rect x="128.50" y="131.5" width="1.4" height="4.6" fill="#606060"/><rect x="153.48" y="133.3" width="1.2" height="1.2"/><rect x="158.45" y="133.3" width="1.2" height="1.2"/><rect x="163.43" y="133.3" width="1.2" height="1.2"/><rect x="173.38" y="133.3" width="1.2" height="1.2"/><rect x="178.35" y="133.3" width="1.2" height="1.2"/><rect x="183.33" y="133.3" width="1.2" height="1.2"/><rect x="168.30" y="131.5" width="1.4" height="4.6" fill="#606060"/><rect x="193.28" y="133.3" width="1.2" height="1.2"/><rect x="198.25" y="133.3" width="1.2" height="1.2"/><rect x="203.23" y="133.3" width="1.2" height="1.2"/><rect x="213.18" y="133.3" width="1.2" height="1.2"/><rect x="218.15" y="133.3" width="1.2" height="1.2"/><rect x="223.13" y="133.3" width="1.2" height="1.2"/><rect x="208.10" y="131.5" width="1.4" height="4.6" fill="#606060"/><rect x="233.08" y="133.3" width="1.2" height="1.2"/><rect x="238.05" y="133.3" width="1.2" height="1.2"/><rect x="243.03" y="133.3" width="1.2" height="1.2"/><rect x="252.98" y="133.3" width="1.2" height="1.2"/><rect x="257.95" y="133.3" width="1.2" height="1.2"/><rect x="262.93" y="133.3" width="1.2" height="1.2"/><rect x="247.90" y="131.5" width="1.4" height="4.6" fill="#606060"/><rect x="272.88" y="133.3" width="1.2" height="1.2"/><rect x="277.85" y="133.3" width="1.2" height="1.2"/><rect x="282.82" y="133.3" width="1.2" height="1.2"/><rect x="292.77" y="133.3" width="1.2" height="1.2"/><rect x="297.75" y="133.3" width="1.2" height="1.2"/><rect x="302.72" y="133.3" width="1.2" height="1.2"/><rect x="287.70" y="131.5" width="1.4" height="4.6" fill="#606060"/><rect x="312.68" y="133.3" width="1.2" height="1.2"/><rect x="317.65" y="133.3" width="1.2" height="1.2"/><rect x="322.62" y="133.3" width="1.2" height="1.2"/><rect x="332.57" y="133.3" width="1.2" height="1.2"/><rect x="337.55" y="133.3" width="1.2" height="1.2"/><rect x="342.52" y="133.3" width="1.2" height="1.2"/><rect x="327.50" y="131.5" width="1.4" height="4.6" fill="#606060"/><rect x="352.48" y="133.3" width="1.2" height="1.2"/><rect x="357.45" y="133.3" width="1.2" height="1.2"/><rect x="362.43" y="133.3" width="1.2" height="1.2"/><rect x="372.38" y="133.3" width="1.2" height="1.2"/><rect x="377.35" y="133.3" width="1.2" height="1.2"/><rect x="382.32" y="133.3" width="1.2" height="1.2"/><rect x="367.30" y="131.5" width="1.4" height="4.6" fill="#606060"/><rect x="392.28" y="133.3" width="1.2" height="1.2"/><rect x="397.25" y="133.3" width="1.2" height="1.2"/><rect x="402.23" y="133.3" width="1.2" height="1.2"/><rect x="412.18" y="133.3" width="1.2" height="1.2"/><rect x="417.15" y="133.3" width="1.2" height="1.2"/><rect x="422.12" y="133.3" width="1.2" height="1.2"/><rect x="407.10" y="131.5" width="1.4" height="4.6" fill="#606060"/><rect x="432.08" y="133.3" width="1.2" height="1.2"/><rect x="437.05" y="133.3" width="1.2" height="1.2"/><rect x="442.03" y="133.3" width="1.2" height="1.2"/><rect x="451.98" y="133.3" width="1.2" height="1.2"/><rect x="456.95" y="133.3" width="1.2" height="1.2"/><rect x="461.93" y="133.3" width="1.2" height="1.2"/><rect x="446.90" y="131.5" width="1.4" height="4.6" fill="#606060"/><rect x="471.88" y="133.3" width="1.2" height="1.2"/><rect x="476.85" y="133.3" width="1.2" height="1.2"/><rect x="481.82" y="133.3" width="1.2" height="1.2"/><rect x="491.77" y="133.3" width="1.2" height="1.2"/><rect x="496.75" y="133.3" width="1.2" height="1.2"/><rect x="501.72" y="133.3" width="1.2" height="1.2"/><rect x="486.70" y="131.5" width="1.4" height="4.6" fill="#606060"/><rect x="511.67" y="133.3" width="1.2" height="1.2"/><rect x="516.65" y="133.3" width="1.2" height="1.2"/><rect x="521.62" y="133.3" width="1.2" height="1.2"/><rect x="531.57" y="133.3" width="1.2" height="1.2"/><rect x="536.55" y="133.3" width="1.2" height="1.2"/><rect x="541.52" y="133.3" width="1.2" height="1.2"/><rect x="526.50" y="131.5" width="1.4" height="4.6" fill="#606060"/><rect x="551.48" y="133.3" width="1.2" height="1.2"/><rect x="556.45" y="133.3" width="1.2" height="1.2"/><rect x="561.42" y="133.3" width="1.2" height="1.2"/><rect x="571.38" y="133.3" width="1.2" height="1.2"/><rect x="576.35" y="133.3" width="1.2" height="1.2"/><rect x="581.33" y="133.3" width="1.2" height="1.2"/><rect x="566.30" y="131.5" width="1.4" height="4.6" fill="#606060"/><rect x="591.27" y="133.3" width="1.2" height="1.2"/><rect x="596.25" y="133.3" width="1.2" height="1.2"/><rect x="601.22" y="133.3" width="1.2" height="1.2"/><rect x="606.10" y="131.5" width="1.4" height="4.6" fill="#606060"/><rect x="45.9" y="161.13" width="1.2" height="1.2"/><rect x="45.9" y="171.08" width="1.2" height="1.2"/><rect x="45.9" y="176.05" width="1.2" height="1.2"/><rect x="45.9" y="181.03" width="1.2" height="1.2"/><rect x="44.2" y="166.00" width="4.6" height="1.4" fill="#606060"/><rect x="45.9" y="190.98" width="1.2" height="1.2"/><rect x="45.9" y="195.95" width="1.2" height="1.2"/><rect x="45.9" y="200.93" width="1.2" height="1.2"/><rect x="45.9" y="210.88" width="1.2" height="1.2"/><rect x="45.9" y="215.85" width="1.2" height="1.2"/><rect x="45.9" y="220.83" width="1.2" height="1.2"/><rect x="44.2" y="205.80" width="4.6" height="1.4" fill="#606060"/><rect x="45.9" y="230.78" width="1.2" height="1.2"/><rect x="45.9" y="235.75" width="1.2" height="1.2"/><rect x="45.9" y="240.73" width="1.2" height="1.2"/><rect x="45.9" y="250.68" width="1.2" height="1.2"/><rect x="45.9" y="255.65" width="1.2" height="1.2"/><rect x="45.9" y="260.62" width="1.2" height="1.2"/><rect x="44.2" y="245.60" width="4.6" height="1.4" fill="#606060"/><rect x="45.9" y="270.57" width="1.2" height="1.2"/><rect x="45.9" y="275.55" width="1.2" height="1.2"/><rect x="45.9" y="280.52" width="1.2" height="1.2"/><rect x="45.9" y="290.47" width="1.2" height="1.2"/><rect x="45.9" y="295.45" width="1.2" height="1.2"/><rect x="45.9" y="300.42" width="1.2" height="1.2"/><rect x="44.2" y="285.40" width="4.6" height="1.4" fill="#606060"/><rect x="45.9" y="310.38" width="1.2" height="1.2"/><rect x="45.9" y="315.35" width="1.2" height="1.2"/><rect x="45.9" y="320.32" width="1.2" height="1.2"/><rect x="45.9" y="330.27" width="1.2" height="1.2"/><rect x="45.9" y="335.25" width="1.2" height="1.2"/><rect x="45.9" y="340.22" width="1.2" height="1.2"/><rect x="44.2" y="325.20" width="4.6" height="1.4" fill="#606060"/><rect x="45.9" y="350.18" width="1.2" height="1.2"/><rect x="45.9" y="355.15" width="1.2" height="1.2"/><rect x="45.9" y="360.12" width="1.2" height="1.2"/><rect x="45.9" y="370.07" width="1.2" height="1.2"/><rect x="45.9" y="375.05" width="1.2" height="1.2"/><rect x="45.9" y="380.02" width="1.2" height="1.2"/><rect x="44.2" y="365.00" width="4.6" height="1.4" fill="#606060"/><rect x="45.9" y="389.98" width="1.2" height="1.2"/><rect x="45.9" y="394.95" width="1.2" height="1.2"/><rect x="45.9" y="399.93" width="1.2" height="1.2"/><rect x="45.9" y="409.88" width="1.2" height="1.2"/><rect x="45.9" y="414.85" width="1.2" height="1.2"/><rect x="45.9" y="419.82" width="1.2" height="1.2"/><rect x="44.2" y="404.80" width="4.6" height="1.4" fill="#606060"/><rect x="45.9" y="429.77" width="1.2" height="1.2"/><rect x="45.9" y="434.75" width="1.2" height="1.2"/><rect x="45.9" y="439.72" width="1.2" height="1.2"/><rect x="45.9" y="449.67" width="1.2" height="1.2"/><rect x="44.2" y="444.60" width="4.6" height="1.4" fill="#606060"/></g></svg>
<div class="a rn" style="left:99.7px;top:129.6px;width:20px;text-align:center">6</div>
<div class="a rn" style="left:139.5px;top:129.6px;width:20px;text-align:center">5</div>
<div class="a rn" style="left:179.3px;top:129.6px;width:20px;text-align:center">4</div>
<div class="a rn" style="left:219.1px;top:129.6px;width:20px;text-align:center">3</div>
<div class="a rn" style="left:258.9px;top:129.6px;width:20px;text-align:center">2</div>
<div class="a rn" style="left:298.7px;top:129.6px;width:20px;text-align:center">1</div>
<div class="a rn" style="left:338.5px;top:129.6px;width:20px;text-align:center">0</div>
<div class="a rn" style="left:378.3px;top:129.6px;width:20px;text-align:center">1</div>
<div class="a rn" style="left:418.1px;top:129.6px;width:20px;text-align:center">2</div>
<div class="a rn" style="left:457.9px;top:129.6px;width:20px;text-align:center">3</div>
<div class="a rn" style="left:497.7px;top:129.6px;width:20px;text-align:center">4</div>
<div class="a rn" style="left:537.5px;top:129.6px;width:20px;text-align:center">5</div>
<div class="a rn" style="left:577.3px;top:129.6px;width:20px;text-align:center">6</div>
<div class="a rn" style="left:36.7px;top:182.5px;width:20px;text-align:center;transform:rotate(-90deg);font-size:8.2px">3</div>
<div class="a rn" style="left:36.7px;top:222.3px;width:20px;text-align:center;transform:rotate(-90deg);font-size:8.2px">2</div>
<div class="a rn" style="left:36.7px;top:262.1px;width:20px;text-align:center;transform:rotate(-90deg);font-size:8.2px">1</div>
<div class="a rn" style="left:36.7px;top:301.9px;width:20px;text-align:center;transform:rotate(-90deg);font-size:8.2px">0</div>
<div class="a rn" style="left:36.7px;top:341.7px;width:20px;text-align:center;transform:rotate(-90deg);font-size:8.2px">1</div>
<div class="a rn" style="left:36.7px;top:381.5px;width:20px;text-align:center;transform:rotate(-90deg);font-size:8.2px">2</div>
<div class="a rn" style="left:36.7px;top:421.3px;width:20px;text-align:center;transform:rotate(-90deg);font-size:8.2px">3</div>
<div class="a" style="left:-6.5px;top:181.4px;width:50px;height:12px;font-size:10px;line-height:12px;color:#444;text-align:center;transform:rotate(-90deg);text-rendering:geometricPrecision;-webkit-text-stroke:0.2px currentColor">Thumbnails</div>
<div class="a t" style="left:247.80px;top:11.50px;font-size:10.6px;line-height:10.6px;letter-spacing:-0.326px;color:#fff;">Mongibello About Us - PowerPoint</div>
<div class="a t" style="left:16.20px;top:34.80px;font-size:10.6px;line-height:10.6px;letter-spacing:-0.433px;color:#fff;">File</div>
<div class="a t" style="left:58.80px;top:34.80px;font-size:10.6px;line-height:10.6px;letter-spacing:-0.200px;color:#fff;">Home</div>
<div class="a t" style="left:102.30px;top:34.80px;font-size:10.6px;line-height:10.6px;letter-spacing:-0.480px;color:#fff;">Insert</div>
<div class="a t" style="left:142.50px;top:34.80px;font-size:10.6px;line-height:10.6px;letter-spacing:-0.480px;color:#fff;">Design</div>
<div class="a t" style="left:190.00px;top:34.80px;font-size:10.6px;line-height:10.6px;letter-spacing:-0.460px;color:#fff;">Transitions</div>
<div class="a t" style="left:253.60px;top:34.80px;font-size:10.6px;line-height:10.6px;letter-spacing:-0.256px;color:#fff;">Animations</div>
<div class="a t" style="left:320.00px;top:34.80px;font-size:10.6px;line-height:10.6px;letter-spacing:-0.800px;color:#fff;">Slide Show</div>
<div class="a t" style="left:381.00px;top:34.80px;font-size:10.6px;line-height:10.6px;letter-spacing:-0.800px;color:#fff;">Review</div>
<div class="a t" style="left:479.30px;top:34.80px;font-size:10.6px;line-height:10.6px;letter-spacing:-0.422px;color:#fff;">Tell me...</div>
<div class="a t" style="left:526.00px;top:34.80px;font-size:10.6px;line-height:10.6px;letter-spacing:-0.400px;color:#fff;">Merced Fl...</div>
<div class="a t" style="left:605.70px;top:34.80px;font-size:10.6px;line-height:10.6px;letter-spacing:-0.975px;color:#fff;">Share</div>
<div class="a t" style="left:428.50px;top:34.80px;font-size:10.6px;line-height:10.6px;letter-spacing:-1.167px;color:#b7472a;">View</div>
<div class="a t" style="left:5.15px;top:83.70px;font-size:10.5px;line-height:10.5px;letter-spacing:-0.280px;color:#333;">Normal</div>
<div class="a t" style="left:42.30px;top:84.00px;font-size:10.5px;line-height:10.5px;letter-spacing:-0.217px;color:#333;">Outline</div>
<div class="a t" style="left:48.00px;top:96.80px;font-size:10.5px;line-height:10.5px;letter-spacing:-0.667px;color:#333;">View</div>
<div class="a t" style="left:94.30px;top:56.00px;font-size:10.5px;line-height:10.5px;letter-spacing:-0.636px;color:#333;">Slide Sorter</div>
<div class="a t" style="left:93.80px;top:74.70px;font-size:10.5px;line-height:10.5px;letter-spacing:-0.678px;color:#333;">Notes Page</div>
<div class="a t" style="left:93.80px;top:93.20px;font-size:10.5px;line-height:10.5px;letter-spacing:-0.627px;color:#333;">Reading View</div>
<div class="a t" style="left:182.70px;top:56.00px;font-size:10.5px;line-height:10.5px;letter-spacing:-0.518px;color:#333;">Slide Master</div>
<div class="a t" style="left:181.70px;top:74.70px;font-size:10.5px;line-height:10.5px;letter-spacing:-0.285px;color:#333;">Handout Master</div>
<div class="a t" style="left:181.70px;top:93.20px;font-size:10.5px;line-height:10.5px;letter-spacing:-0.427px;color:#333;">Notes Master</div>
<div class="a t" style="left:282.00px;top:56.10px;font-size:10.5px;line-height:10.5px;letter-spacing:-0.675px;color:#333;">Ruler</div>
<div class="a t" style="left:283.00px;top:74.50px;font-size:10.5px;line-height:10.5px;letter-spacing:-0.525px;color:#333;">Gridlines</div>
<div class="a t" style="left:283.00px;top:93.70px;font-size:10.5px;line-height:10.5px;letter-spacing:-0.860px;color:#333;">Guides</div>
<div class="a t" style="left:329.20px;top:83.80px;font-size:10.5px;line-height:10.5px;letter-spacing:-0.350px;color:#333;">Notes</div>
<div class="a t" style="left:371.50px;top:83.80px;font-size:10.5px;line-height:10.5px;letter-spacing:-0.233px;color:#333;">Zoom</div>
<div class="a t" style="left:409.80px;top:83.80px;font-size:10.5px;line-height:10.5px;letter-spacing:0.000px;color:#333;">Fit to</div>
<div class="a t" style="left:403.00px;top:96.80px;font-size:10.5px;line-height:10.5px;letter-spacing:-0.200px;color:#333;">Window</div>
<div class="a t" style="left:457.70px;top:82.90px;font-size:10.5px;line-height:10.5px;letter-spacing:-0.040px;color:#333;">Color/</div>
<div class="a t" style="left:448.00px;top:95.40px;font-size:10.5px;line-height:10.5px;letter-spacing:-0.875px;color:#333;">Grayscale</div>
<div class="a t" style="left:501.00px;top:82.90px;font-size:10.5px;line-height:10.5px;letter-spacing:-0.400px;color:#333;">Window</div>
<div class="a t" style="left:543.60px;top:83.80px;font-size:10.5px;line-height:10.5px;letter-spacing:-0.320px;color:#333;">Macros</div>
<div class="a t" style="left:40.60px;top:113.80px;font-size:9.6px;line-height:9.6px;letter-spacing:-0.153px;color:#5a5a5a;">Presentation Views</div>
<div class="a t" style="left:183.80px;top:113.80px;font-size:9.6px;line-height:9.6px;letter-spacing:-0.227px;color:#5a5a5a;">Master Views</div>
<div class="a t" style="left:294.50px;top:113.80px;font-size:9.6px;line-height:9.6px;letter-spacing:-0.300px;color:#5a5a5a;">Show</div>
<div class="a t" style="left:392.00px;top:113.80px;font-size:9.6px;line-height:9.6px;letter-spacing:-0.100px;color:#5a5a5a;">Zoom</div>
<div class="a t" style="left:546.00px;top:113.80px;font-size:9.6px;line-height:9.6px;letter-spacing:-0.600px;color:#5a5a5a;">Macros</div>
<div class="a t" style="left:7.00px;top:474.80px;font-size:10px;line-height:10px;letter-spacing:-0.355px;color:#444;-webkit-text-stroke:0.1px currentColor">Slide 3 of 8</div>
<div class="a t" style="left:93.70px;top:474.50px;font-size:10px;line-height:10px;letter-spacing:-0.345px;color:#444;-webkit-text-stroke:0.1px currentColor">English (United States)</div>
<div class="a t" style="left:242.60px;top:474.40px;font-size:10px;line-height:10px;letter-spacing:-0.400px;color:#444;-webkit-text-stroke:0.1px currentColor">Notes</div>
<div class="a t" style="left:298.00px;top:474.40px;font-size:10px;line-height:10px;letter-spacing:-0.714px;color:#444;-webkit-text-stroke:0.1px currentColor">Comments</div>
<div class="a t" style="left:595.60px;top:474.60px;font-size:10px;line-height:10px;letter-spacing:-1.600px;color:#444;-webkit-text-stroke:0.1px currentColor">52%</div>
<svg class="a" style="left:0;top:0" width="650" height="488" viewBox="0 0 650 488">
<!-- title icons -->
<rect x="18.3" y="7.1" width="12" height="11.5" fill="#fff"/>
<rect x="20.5" y="8.6" width="7.4" height="3.9" rx="0.6" fill="#b7472a"/>
<rect x="21.2" y="14.8" width="5.9" height="2.6" fill="#b7472a"/>
<rect x="23.5" y="16" width="1.9" height="1.4" fill="#fff"/>
<g fill="none" stroke="#fff" stroke-width="1.85" stroke-linecap="round">
<path d="M43,11 L46.5,7.8 M43,11 L46.5,14.2 M43.2,11 H50 A3.6,3.6 0 0 1 50,18.2 H48.5"/>
<path d="M75.12,8.37 A4.5,4.5 0 1 0 79.08,9.62"/>
</g>
<path d="M58.3,11.2 H62.7 L60.5,13.5 Z" fill="#fff"/>
<path d="M76.2,7.1 H81.2 L76.9,11.6 Z" fill="#fff"/>
<g fill="none" stroke="#fff" stroke-width="1.4">
<path d="M93.1,7.9 H106.4" stroke-width="1.5"/>
<path d="M95.1,8.5 V14.6 H98.2" stroke-width="1.2"/>
<circle cx="102.5" cy="13.3" r="3.9" stroke-width="1.3"/>
<path d="M96.8,19.2 L100.2,17.2 L103.6,19.2 M96.8,19.2 H103.6" stroke-width="1.1"/>
</g>
<path d="M101.3,11.4 L104.3,13.3 L101.3,15.2 Z" fill="#fff"/>
<path d="M117,11 Q117,10.3 117.8,10.3 H120 V8 Q120,7.3 120.8,7.3 H122 Q122.7,7.3 122.7,8 V10.3 H128.5 Q129.2,10.3 129.2,11 V16.2 Q129.2,16.8 128.5,16.8 H126.9 V19.2 Q126.9,19.8 126.3,19.8 H120.8 Q120.2,19.8 120.2,19.2 V16.8 H117.7 Q117,16.8 117,16.2 Z" fill="#fff"/>
<rect x="121.4" y="15.9" width="4.4" height="2" fill="#b7472a"/>
<circle cx="126.5" cy="9.9" r="3.7" fill="#fff" stroke="#b7472a" stroke-width="0.9"/>
<path d="M124.8,9.9 L126.1,11.3 L128.3,8.6" fill="none" stroke="#b7472a" stroke-width="1.2"/>
<path d="M144.7,12.3 H149.1" stroke="#fff" stroke-width="1.1"/>
<path d="M144.7,14 H149.1 L146.9,16.6 Z" fill="#fff"/>
<!-- ribbon icons -->
<g stroke="#808080" stroke-width="1" fill="#fff">
<rect x="9.5" y="55.5" width="24.5" height="22"/>
<rect x="45.5" y="55.5" width="25" height="22"/>
<rect x="330" y="55.5" width="24.5" height="22"/>
</g>
<g stroke="#808080" fill="none">
<path d="M19.2,55.5 V77.5 M19.2,71.3 H34" stroke-width="1.3"/>
<path d="M55.2,55.5 V77.5 M55.2,71.3 H70.5" stroke-width="1.3"/>
<path d="M340.5,55.5 V77.5" stroke-width="1.6"/>
<path d="M340.5,70.8 H354.5"/>
<rect x="21.7" y="59.2" width="9.8" height="7.8" rx="1.2" stroke-width="1.1"/>
<rect x="57.9" y="59.2" width="10" height="7.8" rx="1.2" stroke-width="1.1"/>
<rect x="342" y="59.5" width="10.3" height="7.3" rx="1.2" stroke-width="1.1"/>
<rect x="11.8" y="64.5" width="4.8" height="3.3" stroke="#9a9a9a"/>
<rect x="11.8" y="70.2" width="4.8" height="3.3" stroke="#9a9a9a"/>
<path d="M23.5,62.3 H29.5 M23.5,64.5 H26 M27,64.5 H29.5" stroke="#9a9a9a" stroke-width="0.8"/>
<path d="M59.7,62.3 H65.8 M59.7,64.5 H62.3 M63.3,64.5 H65.8" stroke="#9a9a9a" stroke-width="0.8"/>
<path d="M343.8,62.3 H350.5 M343.8,64.5 H346.4 M347.4,64.5 H350.5" stroke="#9a9a9a" stroke-width="0.8"/>
</g>
<rect x="11.8" y="58.8" width="4.8" height="3.3" fill="#f9d2ae" stroke="#ed7d31"/>
<path d="M47,58.7 H51.5" stroke="#ed7d31" stroke-width="1.2"/>
<path d="M47.5,61.2 H52 M47.5,63.6 H51.5 M47.5,66 H52 M47.5,68.4 H51" stroke="#b9c9dc" stroke-width="0.9"/>
<rect x="341" y="71.5" width="13.3" height="5.6" fill="#c4d8f0"/>
<path d="M341,74.2 H354.3" stroke="#4f8ad0" stroke-width="1.1"/>
<!-- small view icons -->
<rect x="79.5" y="54.5" width="10.8" height="10" fill="#eeeeee" stroke="#7a7a7a"/>
<g stroke-width="0.8">
<rect x="81.3" y="56.2" width="3" height="2.6" fill="#f6a766" stroke="#ed7d31"/>
<rect x="85.5" y="56.2" width="3" height="2.6" fill="#f4f4f4" stroke="#8a8a8a"/>
<rect x="81.3" y="60.3" width="3" height="2.6" fill="#f4f4f4" stroke="#8a8a8a"/>
<rect x="85.5" y="60.3" width="3" height="2.6" fill="#f4f4f4" stroke="#8a8a8a"/>
</g>
<rect x="79.5" y="72.6" width="10.8" height="11.8" fill="#f7f7f7" stroke="#7a7a7a"/>
<rect x="81.2" y="74.3" width="7.4" height="3.6" fill="#fff" stroke="#a0a0a0" stroke-width="0.7"/>
<rect x="81.2" y="79" width="7.4" height="3.7" fill="#d4e3f4" stroke="#9ab8dc" stroke-width="0.7"/>
<rect x="79.5" y="92.3" width="10.8" height="10.2" fill="#f0f0f0" stroke="#5a8fce"/>
<path d="M84.9,92.5 V102.5" stroke="#6f8fb5" stroke-width="1"/>
<path d="M81.2,95 H83.5 M81.2,97.2 H83.5 M81.2,99.4 H83.5 M86.4,95 H88.6 M86.4,97.2 H88.6" stroke="#a8a8a8" stroke-width="0.7"/>
<!-- master icons -->
<g fill="#dfe8f3" stroke="#7f7f7f">
<rect x="167.5" y="54.7" width="11.5" height="10.8" rx="0.8"/>
<rect x="167.5" y="72.9" width="11.5" height="11.5" rx="0.8"/>
<rect x="167.5" y="91.6" width="11.5" height="11" rx="0.8"/>
</g>
<path d="M169.6,58 H177 M169.6,60.8 H174.5" stroke="#8fb0d8" stroke-width="1"/>
<g fill="#fff">
<rect x="169.6" y="75" width="3" height="2.8"/><rect x="173.9" y="75" width="3" height="2.8"/>
<rect x="169.6" y="79.4" width="3" height="2.8"/><rect x="173.9" y="79.4" width="3" height="2.8"/>
<rect x="169.6" y="93.7" width="7.3" height="3.2"/><rect x="169.6" y="98" width="7.3" height="2.6"/>
</g>
<!-- checkboxes -->
<g fill="#fff" stroke="#8c8c8c">
<rect x="268.5" y="55.5" width="10" height="9.5"/>
<rect x="268.5" y="73.8" width="10" height="9.3"/>
<rect x="268.5" y="91.9" width="10" height="9.5"/>
</g>
<g fill="none" stroke="#555" stroke-width="1.1">
<path d="M270.9,60.3 L272.9,62.4 L276.4,57.6"/>
<path d="M270.9,78.5 L272.9,80.6 L276.4,75.8"/>
<path d="M270.9,96.7 L272.9,98.8 L276.4,94"/>
</g>
<!-- zoom -->
<g fill="none" stroke="#707070">
<circle cx="381.4" cy="63" r="7.3" stroke-width="2.1"/>
<path d="M386.8,68.5 L393.5,75.2" stroke-width="3" stroke-linecap="round"/>
</g>
<!-- fit to window -->
<rect x="409.2" y="56.2" width="22.8" height="20.3" fill="#fff" stroke="#808080" stroke-width="1.5"/>
<rect x="413.8" y="60.8" width="13.5" height="11.2" rx="1" fill="#f6f6f6" stroke="#7c7c7c" stroke-width="1.1"/>
<path d="M416.3,63.5 H424.8 M416.3,66 H417.3 M418.8,66 H424.8 M416.3,68.6 H417.3 M418.8,68.6 H424.8" stroke="#a0a0a0" stroke-width="0.8"/>
<g fill="#3d85d6">
<path d="M420.6,56.3 L418.3,59 H422.9 Z"/>
<path d="M420.6,76.4 L418.3,73.7 H422.9 Z"/>
<path d="M409.8,66.3 L412.5,64 V68.6 Z"/>
<path d="M431.4,66.3 L428.7,64 V68.6 Z"/>
</g>
<!-- color/grayscale & window boxes -->
<g fill="#fbfbfb" stroke="#dcdcdc">
<rect x="458.5" y="52.5" width="24" height="23.5"/>
<rect x="505.5" y="52.5" width="23.3" height="23.5"/>
</g>
<rect x="465.6" y="58.6" width="11" height="3.2" fill="#fff" stroke="#b0b0b0" stroke-width="0.6"/>
<rect x="465.4" y="61.8" width="11.4" height="4" fill="#a5a5a5"/>
<rect x="465.4" y="65.8" width="11.4" height="4.2" fill="#101010"/>
<path d="M516.4,58.2 H523.5 V62.8" fill="none" stroke="#5a5a5a" stroke-width="1"/>
<rect x="516" y="57.7" width="8" height="2" fill="#5a5a5a"/>
<path d="M512.6,66.5 V61.6 H520" fill="none" stroke="#5a5a5a" stroke-width="1"/>
<rect x="512.1" y="61" width="8.2" height="2" fill="#5a5a5a"/>
<rect x="517.3" y="64.3" width="7.2" height="5" fill="#fff" stroke="#555" stroke-width="1"/>
<rect x="516.8" y="63.8" width="8.2" height="2.1" fill="#2b6cc4"/>
<path d="M490.6,98.6 H494.6 L492.6,100.9 Z M517.3,98.4 H521.3 L519.3,100.7 Z" fill="#555"/>
<!-- macros -->
<rect x="548.6" y="55.6" width="20.4" height="18" fill="#fff" stroke="#6a6a6a"/>
<rect x="548.2" y="55.2" width="21.2" height="3.4" fill="#5f5f5f"/>
<path d="M551,61.7 H554.5 M556,61.7 H560 M561.5,61.7 H566.5 M551,64.7 H554.5 M556,64.7 H560 M561.5,64.7 H566.5 M551,67.7 H554.5 M556,67.7 H560 M551,70.7 H554.5 M556,70.7 H560" stroke="#9a9a9a" stroke-width="0.9"/>
<path d="M563.6,66.9 H571.8 V76.9 H563.6 Z" fill="#fff" stroke="#ed7d31" stroke-width="1.3"/>
<path d="M571.2,66.3 Q574.3,66 574,69 L572.3,69 Z" fill="#ed7d31"/>
<rect x="561.3" y="75" width="7.8" height="2.6" rx="1.2" fill="#ed7d31"/>
<!-- separators -->
<g stroke="#e0e0e0" stroke-width="1">
<path d="M161.5,52 V119 M262.5,52 V119 M363.5,52 V119 M445.5,52 V119 M497.5,52 V119 M539.5,52 V119 M582.5,52 V119"/>
</g>
<!-- dialog launcher & collapse -->
<path d="M354.5,119.5 V114.8 H359.5 M357.2,119.5 H359.5 V117.2 M355.8,116 L359,119.2" fill="none" stroke="#777" stroke-width="0.9"/>
<path d="M634.2,119 L637.5,115.6 L640.8,119" fill="none" stroke="#555" stroke-width="1.6"/>
<!-- status icons -->
<g fill="none" stroke="#666" stroke-width="1.1">
<path d="M69.8,472.8 H73.8 L74.5,473.8 V482 H69.8 Z"/>
<path d="M74.5,473.8 Q75.5,472.5 79.5,472.8 V475"/>
<path d="M70,482 H79.5" stroke-width="1"/>
</g>
<path d="M76,476 L79.6,480.6 M79.6,476 L76,480.6" stroke="#444" stroke-width="1.3"/>
<path d="M74.6,482 V483" stroke="#555" stroke-width="1.2"/>
<path d="M234.3,473.2 L237,475.8 H231.6 Z" fill="#666"/>
<path d="M229.7,477.5 H239 M229.7,480 H239 M229.7,482.6 H239" stroke="#777" stroke-width="1.1"/>
<path d="M284.5,474 H294.2 V480.5 H289.8 L287.8,482.8 V480.5 H284.5 Z" fill="#666"/>
<g fill="none" stroke="#666" stroke-width="1.1">
<rect x="366.6" y="472.5" width="11.2" height="10.3"/>
<path d="M369.6,472.5 V482.8 M369.6,479.8 H377.8"/>
<rect x="396.9" y="472.8" width="4.8" height="4" rx="1"/>
<rect x="403.8" y="472.8" width="4.8" height="4" rx="1"/>
<rect x="396.9" y="478.8" width="4.8" height="4" rx="1"/>
<rect x="403.8" y="478.8" width="4.8" height="4" rx="1"/>
<path d="M458.8,473 H469.5 M459.8,473.5 V477.8 H468.5 V473.5 M464.2,477.8 V483.5 M461.8,483.5 H466.6"/>
</g>
<rect x="371.5" y="474.3" width="4" height="2.6" fill="#777"/>
<path d="M428.2,473.3 Q431,472.3 433.5,473.8 Q436,472.3 438.8,473.3 V482.8 Q436,481.8 433.5,483 Q431,481.8 428.2,482.8 Z" fill="#cfcfcf" stroke="#777" stroke-width="1"/>
<path d="M433.5,473.8 V483" stroke="#777" stroke-width="1"/>
<path d="M484.3,478 H489.3" stroke="#555" stroke-width="1.6"/>
<path d="M492.5,477.5 H573.7" stroke="#c4c4c4" stroke-width="1"/>
<path d="M533.8,474.6 V480" stroke="#b0b0b0" stroke-width="0.9"/>
<rect x="511" y="473.4" width="3.2" height="8.5" fill="#555"/>
<path d="M577,478.2 H583.2 M580.1,475 V481.4" stroke="#555" stroke-width="1.6"/>
<rect x="624.2" y="474" width="10.3" height="9.4" fill="none" stroke="#666" stroke-width="1.1"/>
<g fill="#666">
<path d="M626,475.8 L629,476.3 L626.5,478.8 Z"/>
<path d="M632.8,475.8 L629.8,476.3 L632.3,478.8 Z"/>
<path d="M626,481.6 L629,481.1 L626.5,478.6 Z"/>
<path d="M632.8,481.6 L629.8,481.1 L632.3,478.6 Z"/>
</g>
<!-- thumbnails chevron & scrollbar arrows -->
<path d="M14.6,142.4 L17.9,144.6 L14.6,146.8" fill="none" stroke="#444" stroke-width="1.5"/>
<path d="M639.2,134.3 L642.2,131.3 L645.2,134.3 Z" fill="#555"/>
<path d="M639.2,414 L642.2,417 L645.2,414 Z" fill="#555"/>
<g fill="#555">
<path d="M639.5,429 L642.5,426 L645.5,429 Z"/><path d="M639.5,432.6 L642.5,429.6 L645.5,432.6 Z"/>
<path d="M639.5,440 L642.5,443 L645.5,440 Z"/><path d="M639.5,443.6 L642.5,446.6 L645.5,443.6 Z"/>
</g>
<!-- window controls -->
<g fill="none" stroke="#fff" stroke-width="1">

<path d="M551.5,13.5 H560"/>
<rect x="588.6" y="9.6" width="8.2" height="8" stroke-width="1.2"/>
<path d="M626.6,9.4 L635.2,18 M635.2,9.4 L626.6,18" stroke-width="1.2"/>
</g>
<rect x="512.7" y="8.9" width="10.4" height="7.6" fill="none" stroke="#fff" stroke-width="1.2"/>
<rect x="512.5" y="8.5" width="10.8" height="2.4" fill="#fff"/>
<path d="M515.2,13.8 L517.9,11 L520.6,13.8 Z" fill="#fff"/>
<rect x="517.2" y="13" width="1.4" height="3.2" fill="#fff"/>
<!-- tell me bulb -->
<g fill="none" stroke="#fff" stroke-width="1.1">
<path d="M467.3,41 V39.5 C466,38 465.2,36.8 465.2,35.4 A3.9,3.9 0 0 1 473,35.4 C473,36.8 472.2,38 470.9,39.5 V41 Z"/>
<path d="M467.3,43 H470.9"/>
</g>
<!-- share person -->
<g fill="none" stroke="#fff" stroke-width="1.4">
<circle cx="596" cy="37" r="3.3"/>
<path d="M591.3,46 C591.8,42.5 593.6,41 596,41 C597,41 598,41.3 598.6,41.8"/>
<path d="M597.8,44 H603 M600.4,41.4 V46.6"/>
</g>
</svg>

<div class="a" style="left:0;top:0;width:1px;height:488px;background:#b7472a"></div>
<div class="a" style="left:1px;top:48px;width:1px;height:439px;background:#fafafa;opacity:0.8"></div>
<div class="a" style="left:648px;top:48px;width:1px;height:439px;background:#fafafa;opacity:0.8"></div>
<div class="a" style="left:1px;top:486px;width:648px;height:1px;background:#fafafa;opacity:0.8"></div>
<div class="a" style="left:649px;top:0;width:1px;height:488px;background:#b7472a"></div>
<div class="a" style="left:0;top:487px;width:650px;height:1px;background:#b7472a"></div>
</body></html>
